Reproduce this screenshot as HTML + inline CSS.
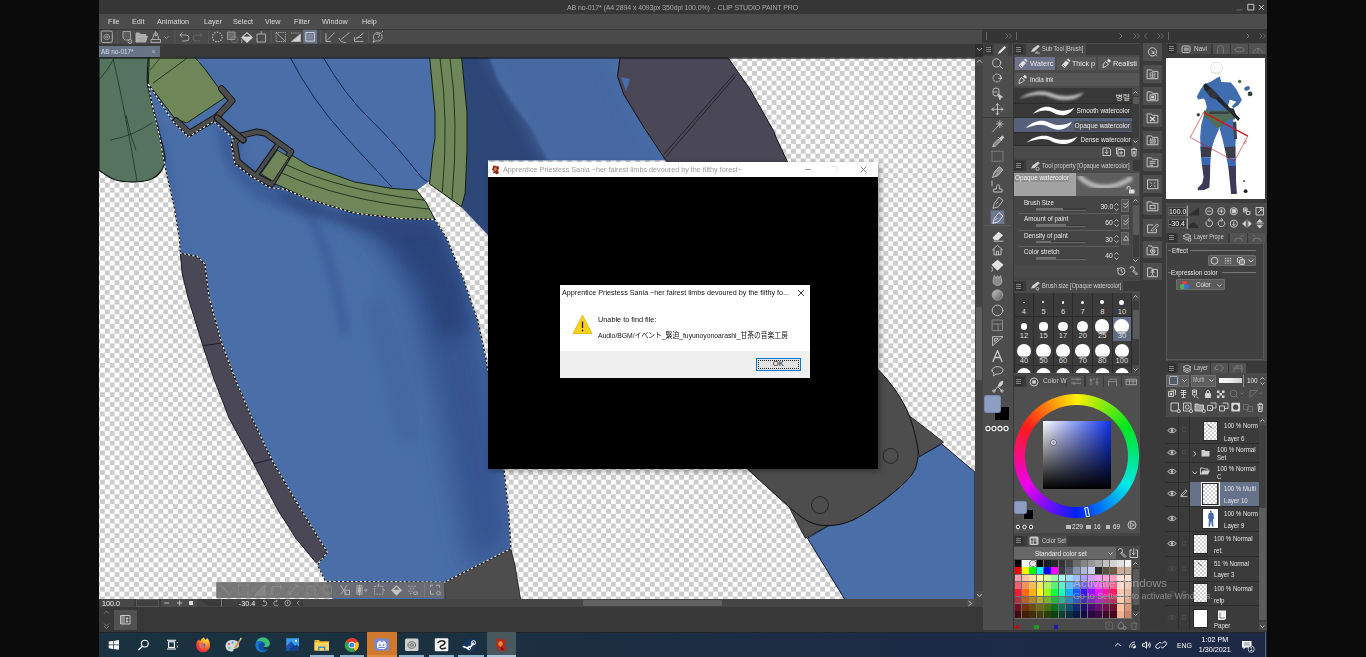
<!DOCTYPE html>
<html lang="en"><head><meta charset="utf-8"><title>CLIP STUDIO PAINT PRO</title>
<style>
*{box-sizing:border-box;margin:0;padding:0}
html,body{width:1366px;height:657px;overflow:hidden;background:#0b0b0b}
body{font-family:"Liberation Sans","Noto Sans CJK JP",sans-serif;font-size:8px;color:#d8d8d8}
#screen{position:absolute;left:0;top:0;width:1366px;height:657px;overflow:hidden;background:#0b0b0b}
.abs{position:absolute}
#app{position:absolute;left:99px;top:0;width:1168px;height:630px;background:#454545;overflow:hidden}
#titlebar{position:absolute;left:0;top:0;width:1168px;height:14.200px;background:#363636}
#titlebar .t{position:absolute;left:468px;top:3px;font-size:7.4px;color:#a9a9a9;white-space:nowrap;letter-spacing:-0.1px}
#menubar{position:absolute;left:0;top:14.200px;width:1168px;height:15.500px;background:#4c4c4c;border-bottom:.9px solid #383838}
#menubar span{position:absolute;top:3px;font-size:8px;color:#dcdcdc;white-space:nowrap;transform-origin:0 50%;transform:scaleX(.9)}
#toolbar{position:absolute;left:0;top:29.700px;width:883px;height:14.300px;background:#4a4a4a}
#tabbar{position:absolute;left:0;top:43.900px;width:883px;height:13px;background:#3a3a3a}
#tab{position:absolute;left:0;top:1.800px;width:61px;height:12px;background:#677488;color:#d5dbe8;font-size:7.4px;line-height:12px;padding-left:2px;white-space:nowrap}
#gamewin{position:absolute;left:488px;top:162px;width:390px;height:307px;background:#000;box-shadow:2px 2px 6px rgba(0,0,0,.35)}
#gamewin .tb{position:absolute;left:0;top:0;width:390px;height:15px;background:#fff}
#gamewin .tt{position:absolute;left:15px;top:1.700px;font-size:7.800px;line-height:12px;color:#9a9a9a;white-space:nowrap}
#msg{position:absolute;left:560px;top:285px;width:250px;height:93px;background:#fff;font-family:"Liberation Sans","Noto Sans CJK JP",sans-serif;color:#111}
#msg .ft{position:absolute;left:0;top:66px;width:250px;height:27px;background:#f0f0f0}
#msg .tt{position:absolute;left:2.200px;top:2.200px;font-size:7.700px;line-height:12px;color:#111;white-space:nowrap}
#msg .l1{position:absolute;left:38px;top:28.700px;font-size:7.500px;line-height:11px;white-space:nowrap}
#msg .l2{position:absolute;left:38px;top:44.700px;font-size:7.500px;line-height:11px;white-space:nowrap}
#okbtn{position:absolute;left:196px;top:73px;width:44.5px;height:12.800px;background:#e1e1e1;border:1.3px solid #0078d7;font-size:7.600px;line-height:10.500px;text-align:center;color:#111}
#okbtn:after{content:"";position:absolute;left:.6px;top:.6px;right:.6px;bottom:.6px;border:.8px dotted #222}
.sx{display:inline-block;transform-origin:0 50%;transform:scaleX(var(--s));white-space:nowrap}
.ic{position:absolute;overflow:visible}
.ic *{vector-effect:none}
#vscroll{position:absolute;left:974.500px;top:43.900px;width:8px;height:555.200px;background:#444}
#toolpal{position:absolute;left:982.500px;top:43px;width:30px;height:589px;background:#4d4d4d}
.grip{position:absolute;background:#2f2f2f}
.pbg{position:absolute;background:#4a4a4a}
.hdr{position:absolute;height:11px;background:#3a3a3a}
.ptab{position:absolute;background:#4a4a4a;color:#cfcfcf;font-size:7.300px;line-height:11px;white-space:nowrap;overflow:visible}
.menu3{position:absolute;width:8px;height:9px;background:#303030}
.menu3:after{content:"";position:absolute;left:1.500px;top:2px;width:5px;height:1px;background:#8a8a8a;box-shadow:0 2px 0 #8a8a8a,0 4px 0 #8a8a8a}
.t{position:absolute;white-space:nowrap;color:#dcdcdc;font-size:7.500px;line-height:9px}
.tr{position:absolute;white-space:nowrap;color:#dcdcdc;font-size:7.500px;line-height:9px;text-align:right}
.sbtn{position:absolute;background:#4e4e4e;width:19px;height:17.700px}
.sb{position:absolute;background:#3c3c3c}

</style></head>
<body>
<div id="screen">
<!-- top.html -->
<div id="app">
 <div id="titlebar"><svg class="ic" style="left:1130px;top:0" width="38" height="14" viewBox="1229 0 38 14" fill="none"><path d="M1236.500,10 H1242.500" stroke="#6f6f6f" stroke-width=".9"/><path d="M1247.800,4.300 H1253.800 V10 H1247.800 Z" stroke="#d6d6d6" stroke-width=".9"/><path d="M1259,5 L1263.800,9.800 M1263.800,5 L1259,9.800" stroke="#d6d6d6" stroke-width=".9"/></svg><div class="t"><span class="sx" style="--s:.943">AB no-017* (A4 2894 x 4093px 350dpi 100.0%)&nbsp; - CLIP STUDIO PAINT PRO</span></div></div>
 <div id="menubar">
  <span style="left:9px">File</span><span style="left:33px">Edit</span><span style="left:58px">Animation</span><span style="left:105px">Layer</span><span style="left:134px">Select</span><span style="left:166px">View</span><span style="left:195px">Filter</span><span style="left:223px">Window</span><span style="left:263px">Help</span>
 </div>
 <div id="toolbar"></div>
 <div id="tabbar"><div id="tab"><span class="sx" style="--s:.86">AB no-017*</span><span style="position:absolute;left:52.500px;top:0;font-size:6.500px;color:#b9c3d8">×</span></div></div>
</div>

<!-- toolbar.html -->
<svg class="ic" style="left:99px;top:29px" width="300" height="16" viewBox="99 29 300 16" fill="none" stroke="#b4b4b4" stroke-width=".9" stroke-linejoin="round">
 <rect x="101.300" y="31" width="11" height="11.500" rx="1.500" stroke="#b5b5b5"/><path d="M104,37 a2.800,2.200 0 1,1 5.500,0 a2.800,2.200 0 1,1 -5.500,0 M105.500,37 a1.300,1 0 1,1 2.600,0 a1.300,1 0 1,1 -2.600,0" stroke-width=".7"/>
 <path d="M117.500,30.500 V43.500" stroke="#5a5a5a"/>
 <path d="M123,31.500 H130.500 V40 H125 L123,38 Z" fill="#5b5b5b" stroke="#a8a8a8"/><circle cx="130" cy="41.500" r="2" fill="#434343"/><path d="M130,40.500 V42.500"/>
 <path d="M136,42 V33 H139.500 L140.500,34.500 H146 V36 M136,42 L138,36.500 H147.500 L145.500,42 Z" fill="#c9c9c9" fill-opacity=".75"/>
 <path d="M151,42.500 H160.500 V39.500 H151 Z M152.500,39.500 L154.500,33 H157 L159,39.500 M155.700,31 V36 M154.200,34.500 L155.700,36.200 L157.200,34.500"/>
 <path d="M164.500,36.500 L166.500,38.500 L168.500,36.500" stroke-width=".8"/>
 <path d="M175,30.500 V43.500" stroke="#5a5a5a"/>
 <path d="M180,35 H186 a2.800,2.800 0 0,1 0,6 H182 M182.300,32.500 L179.800,35 L182.300,37.500"/>
 <path d="M202,35 H196 a2.800,2.800 0 0,0 0,6 H200 M199.700,32.500 L202.200,35 L199.700,37.500" stroke="#666"/>
 <path d="M208.600,30.500 V43.500" stroke="#5a5a5a"/>
 <circle cx="217.300" cy="37" r="4.800" stroke-dasharray="1.400 1.300" stroke-width="1.300"/>
 <rect x="227.500" y="32" width="7.500" height="7.500" fill="#6b6b6b" stroke="#9a9a9a"/><circle cx="234.500" cy="39.500" r="3.300" stroke-dasharray="1 1" stroke="#9a9a9a"/>
 <path d="M241,37.500 L247,32 L253,37.500 L247,43 Z" fill="#d4d4d4" stroke="none"/><path d="M243.500,36.500 H250.500 L247,33.500 Z" fill="#434343" stroke="none"/><path d="M241.500,39.500 q1,2.500 0,3.500" />
 <path d="M257,34 H265.500 V42 H257 Z M261.200,31 V34"/>
 <path d="M271.300,30.500 V43.500" stroke="#5a5a5a"/>
 <path d="M276,32.500 H285.500 V41.500 H276 Z" stroke-dasharray="1.200 1"/><path d="M276,32.500 L285.500,41.500"/>
 <path d="M291,33 H300.500" stroke-dasharray="1.200 1"/><path d="M300.500,34 V41.500 H291.500 Z" fill="#d4d4d4"/>
 <rect x="303.200" y="29.700" width="13.900" height="13.900" fill="#6a7488" stroke="none"/><rect x="305.800" y="32.500" width="8.600" height="8.600" stroke="#d8dbe6"/><rect x="307.300" y="34" width="5.600" height="5.600" fill="#7f889c" stroke="none"/>
 <path d="M320.400,30.500 V43.500" stroke="#5a5a5a"/>
 <path d="M326,33.500 V41.500 H331 M327,40.500 L334.500,32.500"/>
 <path d="M339,38 Q340,42.500 346,42.500 M341,39.500 L349.500,32.500"/>
 <path d="M354.500,37 V41.500 H363.500 M355.500,39.500 L363.500,33"/><path d="M356,37.500 H362" stroke-width=".6"/>
 <path d="M368.400,30.500 V43.500" stroke="#5a5a5a"/>
 <path d="M373.500,36.500 a4.300,4.300 0 1,1 2.500,4.200 L373,42.500 L374.200,39.500 a4.300,4.300 0 0,1 -.7,-3 Z M376.500,35 a1.500,1.500 0 1,1 1.800,1.800 V38 M378.300,39.300 V39.800 M381.500,32.500 L383,31"/>
</svg>

<!-- canvas.html -->
<svg class="abs" id="canvas" style="left:99px;top:56.800px" width="875.5" height="542.300" viewBox="99 56.800 875.5 542.300">
 <defs>
  <pattern id="chk" x="100" y="61" width="9.733" height="9.733" patternUnits="userSpaceOnUse">
   <rect width="9.733" height="9.733" fill="#ffffff"/><rect width="4.867" height="4.867" fill="#cccccc"/><rect x="4.867" y="4.867" width="4.867" height="4.867" fill="#cccccc"/>
  </pattern>
  <filter id="b2" x="-30%" y="-30%" width="160%" height="160%"><feGaussianBlur stdDeviation="1.600"/></filter>
  <filter id="b4" x="-30%" y="-30%" width="160%" height="160%"><feGaussianBlur stdDeviation="4"/></filter>
  <filter id="b8" x="-30%" y="-30%" width="160%" height="160%"><feGaussianBlur stdDeviation="8"/></filter>
  <filter id="b14" x="-30%" y="-30%" width="160%" height="160%"><feGaussianBlur stdDeviation="14"/></filter>
  <clipPath id="legclip"><path id="legshape" d="M148.300,56 L148.300,83.600 L152,103.7 L159.3,134.7 L163.8,160.3 L167.5,178 L173.9,205.4 L179.4,238.3 L180.3,252.9 L197.6,256.5 L204.9,263.8 L209.2,298 L222,343.7 L235.7,380.2 L252,418 L272,460 L297.6,503.8 L318.6,538 L327.4,552 L317.4,564.7 L325.6,581.2 L333,600 L448.9,600 L444.3,582 L511,548.3 L508.6,511 L504,469 L486,358 L488,358 L488,160 L700,160 L700,56 Z"/></clipPath>
   <path id="ants" d="M148.3,83.600 L152,103.700 L159.300,134.7 L163.800,160.300 L167.500,178 L173.900,205.4 L179.400,238.3 L180.3,252.900 L197.600,256.500 L204.900,263.8 L209.200,298 L222,343.700 L235.700,380.200 L252,418 L272,460 L297.600,503.8 L318.600,538 L327.400,552 L317.400,564.7 L325.600,581.2 L444.3,582 L511,548.3 L508.600,511 L504,469 L486,358 L477.8,320.200 L463.200,278.200 L446.8,238 L435,219.300 L400.300,218.400 L354.7,212.900 L309,199.200 L285,189 L270,187.500 L251,176 L235,164 L231.400,145 L233.500,138.500 L213.500,121 L188.500,136.800 L173,121.500 Z"/>
 </defs>
 <rect x="99" y="56" width="876" height="544" fill="url(#chk)"/>
 <!-- main blue body -->
 <use href="#legshape" fill="#4a6fa8"/>
 <g clip-path="url(#legclip)">
  <!-- torso shadow right of vertical strap -->
  <path d="M458,50 L486,50 L490,58 L498,80 L512,102 L533,130 L549,162 L566,186 L566,250 L455,250 Z" fill="#2d4779" filter="url(#b2)"/>
  <path d="M486,50 L600,50 L640,130 L670,170 L552,170 Z" fill="#4667a1" filter="url(#b8)" opacity=".9"/>
  <!-- right side darker -->
  <path d="M436,219 L446.800,238 L463.200,278.200 L477.800,320.200 L486,358 L504,469 L508.600,511 L511,548.300 L470,572 L452,480 L436,400 L410,300 L380,240 L340,214 Z" fill="#34538f" filter="url(#b14)" opacity=".95"/>
  <!-- dark under strap, upper right -->
  <path d="M330,208 L400,219 L437,220 L462,280 L470,330 L440,340 L420,280 L385,240 Z" fill="#2b457c" filter="url(#b8)" opacity=".95"/>
  <!-- shadow under buckle -->
  <path d="M215,120 L243,142 L237,160 L262,176 L300,196 L330,210 L300,215 L260,200 L232,175 L220,150 Z" fill="#3a5b98" filter="url(#b4)" opacity=".9"/>
  <!-- fold streaks -->
  <path d="M305,205 Q335,260 345,335" fill="none" stroke="#3a5a97" stroke-width="9" filter="url(#b4)" opacity=".8"/>
  <path d="M372,300 Q395,370 408,440" fill="none" stroke="#3c5d9a" stroke-width="14" filter="url(#b8)" opacity=".7"/>
  <path d="M150,90 L172,160 L182,250 L160,250 Z" fill="#3f629f" filter="url(#b4)" opacity=".6"/>
   <path d="M280,188 L309,201 L354.700,215 L400.300,220.500 L436,221 L440,236 L400,233 L350,226 L305,213 L278,198 Z" fill="#2d477e" filter="url(#b4)" opacity=".75"/>
 </g>
 <!-- fold lines on torso -->
 <path d="M322.500,56 Q345,95 369.300,118.300 T422.200,178 L427.500,181.500" fill="none" stroke="#0f2148" stroke-width="1"/>
 <path d="M289.500,56 Q312,100 345.500,136.500 T392,187" fill="none" stroke="#0f2148" stroke-width="1"/>
 <!-- gap (transparent) -->
 <path d="M416.8,190 L428.6,181.8 L442.3,192.800 L461.5,207 L488,234.8 L488,360 L486,358 L477.8,320.2 L463.2,278.2 L446.8,238 L435,219.3 L425.9,202 Z" fill="url(#chk)"/>
 <!-- bag -->
 <path d="M148.300,56 L148.300,57 C148.2,61.1 146.8,73.9 147.4,81.7 C148.0,89.5 149.9,94.9 152.0,103.7 C154.1,112.5 157.8,125.6 160.0,134.7 C162.2,143.8 164.8,151.9 165.0,158.0 C165.2,164.1 163.2,167.6 161.0,171.0 C158.8,174.4 156.2,176.7 152.0,178.5 C147.8,180.3 141.7,181.4 135.5,181.6 C129.3,181.8 121.1,181.4 115.0,179.5 C108.900,177.600 101.700,171.600 99.000,170.000 L99,56 Z" fill="#56735f" stroke="#0c1a14" stroke-width="1.200"/>
 <path d="M113,58 Q125,110 137,181" fill="none" stroke="#1a3526" stroke-width=".8"/>
 <path d="M99,80 Q108,70 114,58" fill="none" stroke="#1a3526" stroke-width=".8"/>
 <path d="M110,140 Q135,135 153,122" fill="none" stroke="#1a3526" stroke-width=".8"/>
 <path d="M126,115 Q130,135 136,150" fill="none" stroke="#1a3526" stroke-width=".8"/>
 <!-- upper strap -->
 <path d="M149.200,56 L194,56 L205,69 L217.7,86.3 L225,97.3 L186.7,122.8 L174.8,118.3 L148.3,83.6 Z" fill="#6f8659" stroke="#10200f" stroke-width="1"/>
 <path d="M153,83 L187,58" fill="none" stroke="#10200f" stroke-width=".8"/>
 <path d="M150,70 L160,58" fill="none" stroke="#10200f" stroke-width=".6"/>
 <!-- buckle 1 -->
 <g fill="none" stroke-linejoin="round" stroke-linecap="round">
  <path d="M176,120.5 L189.5,133 L217,116.5 L232,100.5 L221.500,88.5" stroke="#141414" stroke-width="7"/>
  <path d="M217,117.5 L243.3,140" stroke="#141414" stroke-width="6.5"/>
  <path d="M176,120.5 L189.5,133 L217,116.5 L232,100.5 L221.500,88.5" stroke="#4c4c4c" stroke-width="5"/>
  <path d="M217,117.5 L243.3,140" stroke="#4c4c4c" stroke-width="4.5"/>
 </g>
 <!-- horizontal strap -->
 <path d="M289,154.500 L293,155.700 L309,165.400 L354.7,181.8 L391.2,188.2 L416.8,190 L425.9,202 L435,219.3 L400.3,218.4 L354.7,212.9 L309,199.200 L285,188 L273,183 Z" fill="#6f8659" stroke="#10200f" stroke-width="1"/>
 <path d="M285,164 Q340,190 424,200" fill="none" stroke="#10200f" stroke-width=".8"/>
 <path d="M280,172 Q340,200 430,209" fill="none" stroke="#10200f" stroke-width=".8"/>
 <!-- buckle 2 (D ring) -->
 <g fill="none" stroke-linejoin="round" stroke-linecap="round">
  <path d="M241,135.500 L256.700,131.500 L265,133 L291,151.500 L271.500,184 L254,174.500 L237.500,161 L234.500,142.500 Z" stroke="#141414" stroke-width="6.500"/>
  <path d="M276.600,146 L256,175" stroke="#141414" stroke-width="5.500"/>
  <path d="M241,135.500 L256.700,131.500 L265,133 L291,151.500 L271.500,184 L254,174.500 L237.500,161 L234.500,142.500 Z" stroke="#4c4c4c" stroke-width="4.500"/>
  <path d="M276.600,146 L256,175" stroke="#4c4c4c" stroke-width="3.500"/>
 </g>
 <path d="M277.500,150 L289,157 L273,181 L261,173.500 Z" fill="#6f8659" stroke="#10200f" stroke-width=".8"/>
 <path d="M217,117.500 L243.300,140" stroke="#141414" stroke-width="6.500" stroke-linecap="round"/><path d="M217,117.500 L243.300,140" stroke="#4c4c4c" stroke-width="4.500" stroke-linecap="round"/>
 <!-- vertical strap -->
 <path d="M429.500,56 L435,112.800 L435,138 L433.2,149.3 L429.5,183.700 L442.3,192.8 L461.500,206.5 L465.2,192.800 L467,149.3 L467,112.800 L461.500,56 Z" fill="#6f8659" stroke="#10200f" stroke-width="1"/>
 <path d="M440,58 Q449,120 442.300,192" fill="none" stroke="#10200f" stroke-width=".8"/>
 <path d="M450,58 Q459,120 452,199" fill="none" stroke="#10200f" stroke-width=".8"/>
 <!-- dark leg panel (left) -->
 <path d="M180.300,252.9 L197.6,256.5 L204.9,263.800 L209.2,298 L222,343.7 L235.7,380.2 L252,418 L272,460 L297.600,503.800 L318.6,538 L327.400,552 L316.4,562.9 L295.8,538 L277.5,509.3 L253.8,463.700 L229.100,418 L213.8,378.400 L202.8,345.500 L188.2,298 L182.100,273 Z" fill="#4a4756" stroke="#15141c" stroke-width=".9"/>
 <path d="M202.8,345.500 L221,343" stroke="#15141c" stroke-width=".8"/><path d="M253.8,463.700 L271,459" stroke="#15141c" stroke-width=".8"/>
 <!-- knee grey -->
 <path d="M444.300,582 L511,549.2 L515,565.3 L520.700,600 L445,600 Z" fill="#4d4d4d" stroke="#151515" stroke-width=".8"/>
 <!-- sleeve dark panel (top right) -->
 <path d="M620.200,56 L617.500,76.300 L623.900,94.5 L644,127.400 L665.900,160.3 L700,200 L800,200 L787.400,161.400 L776.4,138 L773.700,131 L750,89 L727,56 Z" fill="#4a4756" stroke="#121118" stroke-width="1"/>
 <path d="M621,77 L630,79 L626,91 Z" fill="#4a6fa8"/>
 <path d="M737,74.400 L666,156.600 M735,73 L664,154" stroke="#15141c" stroke-width=".7" fill="none"/>
 <!-- elbow pad -->
 <path d="M907,413.700 L943.600,442 L919.800,456.600 L912,440 Z" fill="#4f4f4f" stroke="#111" stroke-width=".8"/>
 <path d="M789.2,507 L805.2,538 L828,525.800 L800,505 Z" fill="#4f4f4f" stroke="#111" stroke-width=".8"/>
 <!-- forearm blue -->
 <path d="M941.700,443.800 L975,472 L975,600 L845.2,600 L807.500,538 L828,525.800 L853.2,519.7 L885.2,499 L910.300,476.3 L917,458 L919,456.600 Z" fill="#4a6fa8" stroke="#0d1730" stroke-width="1"/>
 <path d="M860.0,355.0 C863.0,357.3 871.8,363.0 877.8,369.0 C883.8,375.0 890.8,383.3 896.0,390.9 C901.2,398.5 905.4,405.8 908.9,414.6 C912.4,423.4 915.7,436.2 917.1,443.8 C918.5,451.4 918.6,454.6 917.5,460.0 C916.4,465.4 915.7,469.8 910.3,476.3 C904.9,482.8 894.7,491.8 885.2,499.0 C875.7,506.2 862.7,515.3 853.2,519.7 C843.7,524.1 835.5,525.2 828.0,525.4 C820.5,525.6 814.5,524.1 808.0,521.0 C801.500,517.900 792.300,509.300 789.200,507.000 L748,469.400 L740,460 Z" fill="#4d4d4d" stroke="#0d0d0d" stroke-width="1"/>
 <circle cx="890.6" cy="455.7" r="7.5" fill="none" stroke="#1c1c1c" stroke-width=".8"/>
 <circle cx="820" cy="504.8" r="8.5" fill="none" stroke="#1c1c1c" stroke-width=".8"/>
 <!-- marching ants -->
 <use href="#ants" fill="none" stroke="#101010" stroke-width="1.1"/>
 <use href="#ants" fill="none" stroke="#ffffff" stroke-width="1.1" stroke-dasharray="2.2 2.2"/>
<!-- selection launcher -->
 <rect x="216.200" y="581.900" width="228.400" height="15.900" fill="#6b6b6b" fill-opacity=".9"/>
 <g fill="none" stroke="#8e8e8e" stroke-width=".9">
  <path d="M220,584.500 L230,595"/><rect x="238.500" y="585" width="9.500" height="9" stroke-dasharray="1.200 1.200"/><path d="M254.500,595 H265 V584.500 Z" fill="#8e8e8e" fill-opacity=".6"/>
  <path d="M272,594 V586.500 H280.500 M280.500,584.500 v4 M270,594 h4"/><path d="M289,594 L298,585 M295,585 h3 v3 M289,591 v3 h3"/>
  <circle cx="311" cy="590" r="4.300" stroke-dasharray="1.300 1.200" stroke-width="1.200"/>
  <path d="M324,585 h6 l1.500,1.500 v7 h-7.500 Z M326,587 h4" stroke="#858585"/>
 </g>
 <g fill="none" stroke="#b4b4b4" stroke-width=".9">
  <path d="M340.500,585 L346,594 M347,585 L341,594"/><rect x="345" y="590" width="4.500" height="4.500"/>
  <path d="M357,585.500 h5 v8.500 h-5 Z M359.500,584.500 v11 M364,590 h2.500 M365.500,588.500 l1.500,1.500 l-1.500,1.500" /><rect x="358" y="587" width="3" height="5.500" fill="#b4b4b4" stroke="none"/>
  <rect x="374.500" y="586" width="8.500" height="8" stroke-dasharray="1.500 1.200"/><path d="M378.700,583.500 v3 M383,590 h2"/>
  <path d="M391,590 L396.500,585 L402,590 L396.500,595.500 Z" fill="#c4c4c4" stroke="none"/><path d="M393.500,589.500 H399.500 L396.500,586.500 Z" fill="#6b6b6b" stroke="none"/>
  <g fill="#b4b4b4" stroke="none"><circle cx="409" cy="586" r=".7"/><circle cx="412" cy="586" r=".7"/><circle cx="415" cy="586" r=".7"/><circle cx="410.500" cy="588.500" r=".7"/><circle cx="413.500" cy="588.500" r=".7"/><circle cx="409" cy="591" r=".7"/><circle cx="412" cy="591" r=".7"/><circle cx="410.500" cy="593.500" r=".7"/></g><ellipse cx="415.500" cy="593" rx="2.300" ry="1.300"/>
  <path d="M424.500,582.500 V597" stroke="#7c7c7c"/>
  <path d="M430.500,587 V585 H433 M436,585 H439.500 V587.500 M430.500,590 V594 H434" /><circle cx="438.500" cy="593" r="1.800"/>
 </g>
</svg>
<div class="abs" style="left:99px;top:56.800px;width:875.500px;height:2px;background:linear-gradient(to bottom,rgba(25,25,28,.85),rgba(25,25,28,.55))"></div>

<!-- dialog.html -->
<div id="gamewin">
 <div class="tb">
  <svg class="abs" style="left:3px;top:2.5px" width="9" height="10" viewBox="0 0 9 10"><path d="M2,1 L4,0.300 L5,1.5 L7,0.800 L8.2,3 L7,5.500 L8,8 L5.500,9.600 L3.800,8 L2,8.600 L2.600,6 L0.600,4.500 L1.800,3 Z" fill="#9c2e1e"/><path d="M3,3 L5,2.500 L6,4.500 L4.500,6.500 L3,5 Z" fill="#d8705a"/><path d="M5.5,6 L7,7.500 L5,8.500Z" fill="#6a1a10"/></svg>
  <div class="tt"><span class="sx" style="--s:0.927">Apprentice Priestess Sania ~her fairest limbs devoured by the filthy forest~</span></div>
  <svg class="abs" style="left:314px;top:0" width="76" height="15" viewBox="0 0 76 15"><path d="M3,7.5 H9" stroke="#8a8a8a" stroke-width=".9"/><path d="M29.500,4.500 H35 V10" stroke="#e6e6e6" stroke-width=".9" fill="none"/><path d="M58.500,4.500 L64.500,10.500 M64.500,4.500 L58.500,10.500" stroke="#777" stroke-width=".9"/></svg>
 </div>
</div>
<div id="msg">
 <div class="tt"><span class="sx" style="--s:0.933">Apprentice Priestess Sania ~her fairest limbs devoured by the filthy fo...</span></div>
 <svg class="abs" style="left:236px;top:3px" width="10" height="10" viewBox="0 0 10 10"><path d="M2,2 L8,8 M8,2 L2,8" stroke="#222" stroke-width=".9"/></svg>
 <svg class="abs" style="left:12px;top:29px" width="21" height="21" viewBox="0 0 21 21"><path d="M10.500,1.200 L20,19.500 L1,19.500 Z" fill="#f7d317" stroke="#e0b400" stroke-width=".8" stroke-linejoin="round"/><path d="M10.500,7.500 V14" stroke="#1a1a1a" stroke-width="1.3"/><circle cx="10.500" cy="16.400" r=".9" fill="#1a1a1a"/></svg>
 <div class="l1"><span class="sx" style="--s:0.973">Unable to find file:</span></div>
 <div class="l2"><span class="sx" style="--s:0.906">Audio/BGM/イベント_緊迫_fuyunoyonoarashi_甘茶の音楽工房</span></div>
 <div class="ft"></div>
 <div id="okbtn">OK</div>
</div>

<!-- tools.html -->
<div class="abs" style="left:982px;top:29.200px;width:285px;height:14px;background:#353535"></div>
<div id="vscroll">
 <div class="abs" style="left:0;top:0;width:8.5px;height:13px;background:#2f2f2f"></div>
 <svg class="ic" style="left:1px;top:3px" width="7" height="5" viewBox="0 0 7 5"><path d="M1,1 L3.500,3.600 L6,1" fill="none" stroke="#c8c8c8" stroke-width=".9"/></svg>
 <div class="abs" style="left:0;top:13px;width:8.5px;height:9px;background:#4a4a4a"></div>
 <svg class="ic" style="left:1px;top:15.5px" width="7" height="5" viewBox="0 0 7 5"><path d="M1,3.600 L3.500,1 L6,3.600" fill="none" stroke="#c8c8c8" stroke-width=".9"/></svg>
 <div class="abs" style="left:1px;top:263px;width:6.500px;height:73.500px;background:#5c5c5c;border-radius:1px"></div>
 <div class="abs" style="left:0;top:547.500px;width:8.500px;height:7.700px;background:#4c4c4c"></div>
 <svg class="ic" style="left:1px;top:549px" width="7" height="5" viewBox="0 0 7 5"><path d="M1,1 L3.500,3.600 L6,1" fill="none" stroke="#c8c8c8" stroke-width=".9"/></svg>
</div>
<div id="toolpal">
 <div class="abs" style="left:0;top:0;width:29.5px;height:13px;background:#3e3e3e"></div>
 <div class="abs" style="left:2px;top:2px;width:7px;height:9px;background:#333"></div>
 <svg class="ic" style="left:3.5px;top:4px" width="5" height="5" viewBox="0 0 5 5"><path d="M0,.5H5M0,2.500H5M0,4.500H5" stroke="#aaa" stroke-width=".7"/></svg>
 <div class="abs" style="left:11.500px;top:1px;width:14px;height:12px;background:#4a4a4a"></div>
 <svg class="ic" style="left:14px;top:2px" width="10" height="10" viewBox="0 0 10 10"><path d="M1,9 L2,6.500 L7.500,1 L9,2.500 L3.500,8 Z" fill="#e4e4e4"/></svg>
 <!-- tool icons, centre x=14.5 -->
 <svg class="ic" style="left:0;top:13px" width="29.500" height="420" viewBox="983 56 29.500 420" fill="none" stroke="#c9c9c9" stroke-width=".9" stroke-linecap="round" stroke-linejoin="round">
  <circle cx="996.700" cy="62.900" r="4.100"/><path d="M999.700,66 L1002.500,68.600"/>
  <circle cx="997" cy="78" r="4" stroke-dasharray="1.500 1.300"/><path d="M1000.500,75.500 L1001.500,78.500 L998.500,78.200" />
  <path d="M993,90 a3,2 0 1,1 6,0 v4 a3,2 0 0,1 -6,0 Z M994,92h3"/><path d="M998,94 L1002.500,97 L1000.500,97.500 L1000,99.500 Z" fill="#d6d6d6"/>
  <path transform="translate(0,1.300)" d="M997.500,102.500 V113.500 M992,108 H1003 M996,104 L997.500,102.500 L999,104 M996,112 L997.500,113.500 L999,112 M993.500,106.500 L992,108 L993.500,109.500 M1001.500,106.500 L1003,108 L1001.500,109.500"/>
  <path d="M983,117.500 H1012.500" stroke="#3a3a3a" stroke-width="1"/>
  <g transform="translate(0,2)"><path d="M992.500,130 L998.500,123.500 M999.800,118.500 V125.500 M996.500,122 H1003 M997.500,119.700 L1002,124.300 M1002,119.700 L997.500,124.300" stroke-width=".8"/></g>
  <g transform="translate(0,1)"><path d="M992.800,145.500 L993.800,142.800 L998.500,138 L1000.500,140 L995.800,144.700 Z" fill="#c9c9c9" fill-opacity=".45"/><path d="M998.500,136.500 L1002,140 M999.500,137.500 L1001.500,135.500 a1.200,1.200 0 0,1 1.700,1.700 L1001,139.300" fill="#c9c9c9"/></g>
  <g transform="translate(0,1.3)"><rect x="992" y="150" width="11" height="10" stroke-dasharray="1 1.200" stroke="#8c8c8c"/></g>
  <g transform="translate(0,0.6)"><path d="M992.600,176.500 L994.300,171.500 L999.300,166 L1003,169.300 L998,174.800 Z" fill="#c9c9c9" fill-opacity=".55"/><path d="M996.800,171.800 L993.500,175.500" stroke="#4d4d4d"/></g>
  <path d="M994,192 h8 v-3 h-2.500 v-2 a1.600,1.600 0 1,0 -3,0 v2 h-2.500 Z M992,181 v5" />
  <path d="M993,208 L994.500,203 L999,197 L1003,200.500 L998.500,206.500 Z M996.500,203.500 L998,202"/>
  <rect x="990.600" y="210.400" width="13.800" height="13.600" fill="#6c7690" stroke="none"/><path d="M985,225.400 H1010" stroke="#666" stroke-width=".7"/>
  <path d="M993,223 L994.500,218 L999,212.500 L1003,216 L998.500,221.500 Z M995.500,220 L997.500,218" stroke="#eef0f6"/>
  <g transform="translate(0,1.2)"><path d="M992.500,236.500 L998.500,230.500 L1003,234 L998,239 H994.500 Z" fill="#e4e4e4" stroke="none"/><path d="M994,240 H1003" /></g>
  <g transform="translate(0,1.8)"><path d="M992.500,248 L997.500,243.500 L1002.500,248 M994,247.500 V253 H1001 V247.500 M996.500,253 V249.500 H998.500 V253"/></g>
  <g transform="translate(0,0.8)"><path d="M991.500,264 L997.500,259 L1003.500,264 L997.500,270 Z" fill="#e4e4e4" stroke="none"/><path d="M992,266.500 q1.500,3 0,4" /></g>
  <g transform="translate(0,-2)"><path d="M993,283 a4.500,4.500 0 1,0 9,0 l-1.500,-5.500 l-1.500,3 l-1.500,-3 l-1.500,3 l-1.500,-3 Z" fill="#8a8a8a" stroke="#bdbdbd" stroke-width=".7"/></g>
  <circle cx="997.500" cy="295" r="5.300" fill="url(#tg)" stroke="#b0b0b0" stroke-width=".6"/>
  <circle cx="997.500" cy="310.400" r="5.300"/>
  <path d="M992.500,320 H1002.500 V330.500 H992.500 Z M992.500,324 H1002.500 M998,324 V330.500" stroke="#8d8d8d"/>
  <path d="M992.900,336.700 H1003 L992.900,345.500 Z M994.900,338.700 H998.300 L994.900,341.700 Z" />
  <path d="M993,361.500 L997.500,350.500 L1002,361.500 M994.800,357.500 H1000.200" stroke-width="1.300"/>
  <path d="M992,370.500 a5.500,3.800 0 1,1 4,3.500 l-2.500,2 l.5,-2.800 a4,3 0 0,1 -2,-2.700 Z"/>
  <path d="M994,391 L1001,383 M994,391 m-1.200,0 a1.200,1.200 0 1,0 2.400,0 a1.200,1.200 0 1,0 -2.400,0 M1002,391 m-1.200,0 a1.200,1.200 0 1,0 2.400,0 a1.200,1.200 0 1,0 -2.400,0 M998,387 L1002,391" /><path d="M998.500,385.500 q.5,-4 4.500,-4.500 q0,4 -3,5.500 Z" fill="#d6d6d6"/>
  <defs><linearGradient id="tg" x1="0" y1="0" x2="1" y2="1"><stop offset="0" stop-color="#c4c4c4"/><stop offset="1" stop-color="#5c5c5c"/></linearGradient></defs>
 </svg>
 <div class="abs" style="left:11.500px;top:362.500px;width:15.500px;height:15px;background:#000;border:1px solid #4f4f4f"></div>
 <div class="abs" style="left:1px;top:352.200px;width:17.600px;height:18.200px;background:#8f9dc0;border:1.300px solid #7688b6;border-radius:2.500px"></div>
 <svg class="ic" style="left:1.500px;top:381.500px" width="26" height="7" viewBox="0 0 26 7"><rect x=".5" y=".5" width="25" height="6" rx="3" fill="#3a3a3a" stroke="#555" stroke-width=".6"/><g fill="none" stroke="#fff" stroke-width="1.100"><circle cx="4" cy="3.500" r="2.100"/><circle cx="10" cy="3.500" r="2.100"/><circle cx="16" cy="3.500" r="2.100"/><circle cx="22" cy="3.500" r="2.100"/></g></svg>
</div>
<div class="abs" style="left:1012.5px;top:43px;width:1.500px;height:587px;background:#383838"></div>

<!-- subtool.html -->
<div class="abs" style="left:985.500px;top:32px;width:1.600px;height:8px;background:#6a6a6a"></div>
<div class="abs" style="left:1015.500px;top:32px;width:1.600px;height:8px;background:#6a6a6a"></div>
<div class="abs" style="left:1167.500px;top:32px;width:1.600px;height:8px;background:#6a6a6a"></div>
<svg class="ic" style="left:1004.5px;top:33px" width="8" height="6" viewBox="0 0 8 6"><path d="M.5,.5 L3,3 L.5,5.500 M4,.5 L6.500,3 L4,5.500" fill="none" stroke="#7a7a7a" stroke-width=".9"/></svg>
<svg class="ic" style="left:1119px;top:33px" width="4" height="6" viewBox="0 0 4 6"><path d="M.5,.5 L3,3 L.5,5.500" fill="none" stroke="#7a7a7a" stroke-width=".9"/></svg>
<svg class="ic" style="left:1132.5px;top:33px" width="8" height="6" viewBox="0 0 8 6"><path d="M.5,.5 L3,3 L.5,5.500 M4,.5 L6.500,3 L4,5.500" fill="none" stroke="#7a7a7a" stroke-width=".9"/></svg>
<svg class="ic" style="left:1143.5px;top:33px" width="4" height="6" viewBox="0 0 4 6"><path d="M3,.5 L.5,3 L3,5.500" fill="none" stroke="#7a7a7a" stroke-width=".9"/></svg>
<svg class="ic" style="left:1156.5px;top:33px" width="8" height="6" viewBox="0 0 8 6"><path d="M.5,.5 L3,3 L.5,5.500 M4,.5 L6.500,3 L4,5.500" fill="none" stroke="#7a7a7a" stroke-width=".9"/></svg>
<svg class="ic" style="left:1245.5px;top:33px" width="4" height="6" viewBox="0 0 4 6"><path d="M.5,.5 L3,3 L.5,5.500" fill="none" stroke="#7a7a7a" stroke-width=".9"/></svg>
<svg class="ic" style="left:1259px;top:33px" width="8" height="6" viewBox="0 0 8 6"><path d="M.5,.5 L3,3 L.5,5.500 M4,.5 L6.500,3 L4,5.500" fill="none" stroke="#7a7a7a" stroke-width=".9"/></svg>
<div class="pbg" style="left:1013.500px;top:43px;width:126.500px;height:114.500px"></div>
<div class="hdr" style="left:1013.500px;top:43.5px;width:126.500px;height:11.5px"></div>
<div class="menu3" style="left:1014.500px;top:44.5px"></div>
<div class="ptab" style="left:1025.5px;top:43.5px;width:60.5px;height:11.5px"></div>
<div class="t" style="left:1042px;top:45.1px;font-size:7.4px;line-height:8.9px;color:#cfcfcf;"><span class="sx" style="--s:0.762">Sub Tool [Brush]</span></div>
<svg class="ic" style="left:1029.5px;top:44.0px" width="11" height="10" viewBox="0 0 11 10"><path d="M1,8 L2.500,5 L8,0.800 L9.800,2.500 L4.500,7.500 Z" fill="#d0d0d0"/><path d="M5,9 H10 M7,7 V9" stroke="#d0d0d0" stroke-width=".8"/></svg>
<div class="abs" style="left:1014.5px;top:56.8px;width:40.5px;height:13.3px;background:#6d7489"></div>
<div class="t" style="left:1030px;top:58.9px;font-size:7.8px;line-height:9.4px;color:#e6e6e6;"><span class="sx" style="--s:0.963">Waterc</span></div>
<svg class="ic" style="left:1017.0px;top:58.3px" width="11" height="11" viewBox="0 0 11 11"><path d="M1.500,7.500 L6,2.500 L9,5 L4.500,10 Z" fill="#e0e0e0"/><path d="M7,1.800 L8.300,0.600 L10.500,2.700 L9.300,4 Z" fill="#e0e0e0"/><path d="M3,7 L5,9" stroke="#555" stroke-width=".7"/></svg>
<div class="abs" style="left:1057px;top:56.8px;width:39px;height:13.3px;background:#565656"></div>
<div class="t" style="left:1072px;top:58.9px;font-size:7.8px;line-height:9.4px;color:#e6e6e6;"><span class="sx" style="--s:0.915">Thick p</span></div>
<svg class="ic" style="left:1059.5px;top:58.3px" width="11" height="11" viewBox="0 0 11 11"><path d="M1.500,7.500 L6,2.500 L9,5 L4.500,10 Z" fill="#e0e0e0"/><path d="M7,1.800 L8.300,0.600 L10.500,2.700 L9.300,4 Z" fill="#e0e0e0"/><path d="M3,7 L5,9" stroke="#555" stroke-width=".7"/></svg>
<div class="abs" style="left:1098px;top:56.8px;width:40.7px;height:13.3px;background:#565656"></div>
<div class="t" style="left:1113px;top:58.9px;font-size:7.8px;line-height:9.4px;color:#e6e6e6;"><span class="sx" style="--s:0.938">Realisti</span></div>
<svg class="ic" style="left:1100.5px;top:58.3px" width="11" height="11" viewBox="0 0 11 11"><path d="M2,9.500 Q1.500,6 4.500,3.500 L7.500,6 Q5.500,9 2,9.500 Z" fill="none" stroke="#e0e0e0" stroke-width=".9"/><path d="M6,2.600 L7.800,0.800 L10,2.900 L8.300,4.700 Z" fill="#e0e0e0"/></svg>
<div class="abs" style="left:1014.5px;top:72.5px;width:124.2px;height:13.5px;background:#565656"></div>
<div class="t" style="left:1030px;top:74.8px;font-size:7.8px;line-height:9.4px;color:#e6e6e6;"><span class="sx" style="--s:0.809">India ink</span></div>
<svg class="ic" style="left:1017.0px;top:74.0px" width="11" height="11" viewBox="0 0 11 11"><path d="M2,9.500 Q1.500,6 4.500,3.500 L7.500,6 Q5.500,9 2,9.500 Z" fill="none" stroke="#e0e0e0" stroke-width=".9"/><path d="M6,2.600 L7.800,0.800 L10,2.900 L8.300,4.700 Z" fill="#e0e0e0"/></svg>
<div class="abs" style="left:1014px;top:88px;width:117.500px;height:57.500px;background:#2c2c2c"></div>
<div class="abs" style="left:1014px;top:88.4px;width:117.500px;height:14.6px;background:#383838;overflow:hidden">
<svg class="ic" style="left:0;top:0" width="118" height="14.6" viewBox="0 0 118 14"><defs><filter id="bf0" x="-10%" y="-40%" width="120%" height="180%"><feGaussianBlur stdDeviation="1.0"/></filter></defs><path d="M5,10.500 C16.7,2.4 28.4,1.4 37.5,4.8 S57.0,8.8 70,4 C62.2,14.1 46.6,13.1 37.5,9.2 S19.3,6.1 5,10.500 Z" fill="#fff" fill-opacity="0.62" filter="url(#bf0)"/></svg>
</div>
<div class="tr" style="right:236.4px;top:92.5px;font-family:NanumGothic,sans-serif;font-size:7.600px;color:#e8e8e8">병렬</div>
<div class="abs" style="left:1014px;top:103.6px;width:117.500px;height:13.1px;background:#383838;overflow:hidden">
<svg class="ic" style="left:0;top:0" width="118" height="13.1" viewBox="0 0 118 14"><defs><filter id="bf1" x="-10%" y="-40%" width="120%" height="180%"><feGaussianBlur stdDeviation="0.7"/></filter></defs><path d="M16,10.500 C23.9,2.3 31.8,1.3 38.0,4.6 S51.2,8.6 60,4 C54.7,14.2 44.2,13.2 38.0,9.4 S25.7,6.2 16,10.500 Z" fill="#fff" fill-opacity="1" filter="url(#bf1)"/></svg>
</div>
<div class="tr" style="right:235.8px;top:106.4px;font-size:7.8px;line-height:9.4px;color:#ececec;"><span class="sx" style="--s:0.823;transform-origin:100% 50%">Smooth watercolor</span></div>
<div class="abs" style="left:1014px;top:118.2px;width:117.500px;height:13.5px;background:#58617c;overflow:hidden">
<svg class="ic" style="left:0;top:0" width="118" height="13.5" viewBox="0 0 118 14"><defs><filter id="bf2" x="-10%" y="-40%" width="120%" height="180%"><feGaussianBlur stdDeviation="0.7"/></filter></defs><path d="M10,10.500 C18.6,2.3 27.3,1.3 34.0,4.6 S48.4,8.6 58,4 C52.2,14.2 40.7,13.2 34.0,9.4 S20.6,6.2 10,10.500 Z" fill="#fff" fill-opacity="1" filter="url(#bf2)"/></svg>
<div class="abs" style="right:0;top:3px;width:57.500px;height:10px;background:#4b4d57"></div>
</div>
<div class="tr" style="right:235.8px;top:121.4px;font-size:7.8px;line-height:9.4px;color:#ececec;"><span class="sx" style="--s:0.841;transform-origin:100% 50%">Opaque watercolor</span></div>
<div class="abs" style="left:1014px;top:132.5px;width:117.500px;height:12.8px;background:#383838;overflow:hidden">
<svg class="ic" style="left:0;top:0" width="118" height="12.8" viewBox="0 0 118 14"><defs><filter id="bf3" x="-10%" y="-40%" width="120%" height="180%"><feGaussianBlur stdDeviation="0.6"/></filter></defs><path d="M8,10.500 C18.1,2.4 28.2,1.4 36.0,4.8 S52.8,8.8 64,4 C57.3,14.1 43.8,13.1 36.0,9.2 S20.3,6.1 8,10.500 Z" fill="#fff" fill-opacity="1" filter="url(#bf3)"/></svg>
</div>
<div class="tr" style="right:235.8px;top:135.0px;font-size:7.8px;line-height:9.4px;color:#ececec;"><span class="sx" style="--s:0.827;transform-origin:100% 50%">Dense watercolor</span></div>
<div class="sb" style="left:1132px;top:88px;width:7px;height:57.500px"></div>
<div class="abs" style="left:1132px;top:88px;width:7px;height:8px;background:#4a4a4a"></div><svg class="ic" style="left:1133px;top:90.5px" width="5" height="3" viewBox="0 0 5 3"><path d="M0.500,2.5 L2.5,0.500 L4.5,2.5" fill="none" stroke="#c8c8c8" stroke-width=".9"/></svg>
<div class="abs" style="left:1132.500px;top:97px;width:6px;height:7px;background:#5a5a5a;border-radius:1px"></div>
<div class="abs" style="left:1132px;top:137.500px;width:7px;height:8px;background:#4a4a4a"></div><svg class="ic" style="left:1133px;top:140px" width="5" height="3" viewBox="0 0 5 3"><path d="M0.500,0.500 L2.5,2.5 L4.5,0.500" fill="none" stroke="#c8c8c8" stroke-width=".9"/></svg>
<svg class="ic" style="left:1100px;top:147px" width="40" height="10" viewBox="1100 147 40 10" fill="none" stroke="#cfcfcf" stroke-width=".9"><path d="M1103,148 H1109 L1110.500,149.500 V155.500 H1103 Z M1106.700,149.500 V153.500 M1105,152 L1106.700,153.700 L1108.400,152"/><path d="M1116.500,148 H1122 V149.500 M1118,149.500 H1124.500 V156 H1118 Z M1116.500,148 V154 H1118 M1121.200,151 V154.600 M1119.400,152.800 H1123"/><path d="M1131,149.500 H1137 M1133,149.500 V148.300 H1135 V149.500 M1131.700,149.500 L1132.200,156 H1135.800 L1136.300,149.500 M1133.300,151 V154.500 M1134.700,151 V154.500"/></svg>
<div class="pbg" style="left:1013.500px;top:160px;width:126.500px;height:116.500px"></div>
<div class="hdr" style="left:1013.500px;top:160.2px;width:126.500px;height:11.2px"></div>
<div class="menu3" style="left:1014.500px;top:161.2px"></div>
<div class="ptab" style="left:1026px;top:160.2px;width:106.5px;height:11.2px"></div>
<div class="t" style="left:1042px;top:161.7px;font-size:7.4px;line-height:8.9px;color:#cfcfcf;"><span class="sx" style="--s:0.787">Tool property [Opaque watercolor]</span></div>
<svg class="ic" style="left:1030px;top:160.7px" width="11" height="10" viewBox="0 0 11 10"><path d="M1,7.500 L2.500,4.500 L8,0.500 L9.800,2.200 L4.500,7 Z" fill="#d0d0d0"/><circle cx="7.500" cy="7.800" r="1.600" fill="none" stroke="#d0d0d0" stroke-width=".8"/></svg>
<div class="abs" style="left:1013.800px;top:173px;width:125.200px;height:22.800px;background:#5e5e5e;overflow:hidden">
<div class="abs" style="left:0;top:0;width:62.700px;height:22.800px;background:#a3a3a3"></div>
<svg class="ic" style="left:0;top:0" width="125" height="23" viewBox="0 0 125 23"><defs><filter id="bfp"><feGaussianBlur stdDeviation="1.600"/></filter></defs><path d="M66,4 C80,18 100,16 116,6" fill="none" stroke="#b9b9b9" stroke-width="5" stroke-linecap="round" filter="url(#bfp)"/></svg>
<div class="abs" style="left:.5px;top:.8px;width:55px;height:8.400px;background:#8f8f8f"></div>
<svg class="ic" style="left:112px;top:12px" width="9" height="9" viewBox="0 0 9 9"><rect x="3" y="4.500" width="5.500" height="4" fill="#e2e2e2"/><path d="M1,4.500 V3 a1.600,1.600 0 0,1 3.200,0 V4.500" fill="none" stroke="#e2e2e2" stroke-width=".9"/></svg>
</div>
<div class="t" style="left:1014.7px;top:173.3px;font-size:7.8px;line-height:9.4px;color:#f4f4f4;"><span class="sx" style="--s:0.818">Opaque watercolor</span></div>
<div class="abs" style="left:1013.800px;top:196px;width:118.200px;height:68.500px;background:#454545"></div>
<div class="t" style="left:1023.8px;top:197.7px;font-size:7.8px;line-height:9.4px;color:#e8e8e8;"><span class="sx" style="--s:0.793">Brush Size</span></div>
<div class="abs" style="left:1035.500px;top:208.2px;width:50px;height:2.400px;background:#3a3a3a;border-bottom:.7px solid #666"></div>
<div class="abs" style="left:1035.500px;top:208.0px;width:27.5px;height:2.200px;background:#707070"></div>
<div class="tr" style="right:253.3px;top:201.8px;font-size:7.8px;line-height:9.4px;color:#e8e8e8;"><span class="sx" style="--s:0.843;transform-origin:100% 50%">30.0</span></div>
<svg class="ic" style="left:1114px;top:202.5px" width="5" height="3" viewBox="0 0 5 3"><path d="M0.500,2.5 L2.5,0.500 L4.5,2.5" fill="none" stroke="#c8c8c8" stroke-width=".9"/></svg><svg class="ic" style="left:1114px;top:207.5px" width="5" height="3" viewBox="0 0 5 3"><path d="M0.500,0.500 L2.5,2.5 L4.5,0.500" fill="none" stroke="#c8c8c8" stroke-width=".9"/></svg>
<div class="abs" style="left:1019px;top:213.2px;width:100px;height:.7px;background:#5e5e5e"></div>
<div class="abs" style="left:1121.200px;top:198.6px;width:8.200px;height:13.600px;background:#565656;border:.6px solid #6a6a6a"></div>
<svg class="ic" style="left:1122.700px;top:201.2px" width="6" height="8" viewBox="0 0 6 8"><path d="M.5,2 L2.500,4 L5.500,.5 M.5,5 L2.500,7 L5.500,3.500" fill="none" stroke="#cfcfcf" stroke-width=".8"/></svg>
<div class="t" style="left:1023.8px;top:214.1px;font-size:7.8px;line-height:9.4px;color:#e8e8e8;"><span class="sx" style="--s:0.809">Amount of paint</span></div>
<div class="abs" style="left:1035.500px;top:224.6px;width:50px;height:2.400px;background:#3a3a3a;border-bottom:.7px solid #666"></div>
<div class="abs" style="left:1035.500px;top:224.4px;width:30.0px;height:2.200px;background:#707070"></div>
<div class="tr" style="right:253.3px;top:218.2px;font-size:7.8px;line-height:9.4px;color:#e8e8e8;"><span class="sx" style="--s:0.865;transform-origin:100% 50%">60</span></div>
<svg class="ic" style="left:1114px;top:218.95px" width="5" height="3" viewBox="0 0 5 3"><path d="M0.500,2.5 L2.5,0.500 L4.5,2.5" fill="none" stroke="#c8c8c8" stroke-width=".9"/></svg><svg class="ic" style="left:1114px;top:223.95px" width="5" height="3" viewBox="0 0 5 3"><path d="M0.500,0.500 L2.5,2.5 L4.5,0.500" fill="none" stroke="#c8c8c8" stroke-width=".9"/></svg>
<div class="abs" style="left:1019px;top:229.6px;width:100px;height:.7px;background:#5e5e5e"></div>
<div class="abs" style="left:1121.200px;top:215.0px;width:8.200px;height:13.600px;background:#565656;border:.6px solid #6a6a6a"></div>
<svg class="ic" style="left:1122.700px;top:217.6px" width="6" height="8" viewBox="0 0 6 8"><path d="M.5,2 L2.500,4 L5.500,.5 M.5,5 L2.500,7 L5.500,3.500" fill="none" stroke="#cfcfcf" stroke-width=".8"/></svg>
<div class="t" style="left:1023.8px;top:230.6px;font-size:7.8px;line-height:9.4px;color:#e8e8e8;"><span class="sx" style="--s:0.813">Density of paint</span></div>
<div class="abs" style="left:1035.500px;top:241.1px;width:50px;height:2.400px;background:#3a3a3a;border-bottom:.7px solid #666"></div>
<div class="abs" style="left:1035.500px;top:240.9px;width:15.0px;height:2.200px;background:#707070"></div>
<div class="tr" style="right:253.3px;top:234.7px;font-size:7.8px;line-height:9.4px;color:#e8e8e8;"><span class="sx" style="--s:0.865;transform-origin:100% 50%">30</span></div>
<svg class="ic" style="left:1114px;top:235.4px" width="5" height="3" viewBox="0 0 5 3"><path d="M0.500,2.5 L2.5,0.500 L4.5,2.5" fill="none" stroke="#c8c8c8" stroke-width=".9"/></svg><svg class="ic" style="left:1114px;top:240.4px" width="5" height="3" viewBox="0 0 5 3"><path d="M0.500,0.500 L2.5,2.5 L4.5,0.500" fill="none" stroke="#c8c8c8" stroke-width=".9"/></svg>
<div class="abs" style="left:1019px;top:246.1px;width:100px;height:.7px;background:#5e5e5e"></div>
<div class="abs" style="left:1121.200px;top:231.5px;width:8.200px;height:13.600px;background:#565656;border:.6px solid #6a6a6a"></div>
<svg class="ic" style="left:1122.700px;top:235.1px" width="6" height="6" viewBox="0 0 6 6"><path d="M3,.8 L5.500,5.200 H.5 Z" fill="none" stroke="#cfcfcf" stroke-width=".8"/></svg>
<div class="t" style="left:1023.8px;top:247.0px;font-size:7.8px;line-height:9.4px;color:#e8e8e8;"><span class="sx" style="--s:0.805">Color stretch</span></div>
<div class="abs" style="left:1035.500px;top:257.5px;width:50px;height:2.400px;background:#3a3a3a;border-bottom:.7px solid #666"></div>
<div class="abs" style="left:1035.500px;top:257.3px;width:20.0px;height:2.200px;background:#707070"></div>
<div class="tr" style="right:253.3px;top:251.2px;font-size:7.8px;line-height:9.4px;color:#e8e8e8;"><span class="sx" style="--s:0.865;transform-origin:100% 50%">40</span></div>
<svg class="ic" style="left:1114px;top:251.85px" width="5" height="3" viewBox="0 0 5 3"><path d="M0.500,2.5 L2.5,0.500 L4.5,2.5" fill="none" stroke="#c8c8c8" stroke-width=".9"/></svg><svg class="ic" style="left:1114px;top:256.84999999999997px" width="5" height="3" viewBox="0 0 5 3"><path d="M0.500,0.500 L2.5,2.5 L4.5,0.500" fill="none" stroke="#c8c8c8" stroke-width=".9"/></svg>
<div class="sb" style="left:1132.500px;top:196px;width:6.500px;height:68.500px"></div>
<div class="abs" style="left:1132.500px;top:196px;width:6.500px;height:8px;background:#4a4a4a"></div><svg class="ic" style="left:1133.3px;top:198.5px" width="5" height="3" viewBox="0 0 5 3"><path d="M0.500,2.5 L2.5,0.500 L4.5,2.5" fill="none" stroke="#c8c8c8" stroke-width=".9"/></svg>
<div class="abs" style="left:1133px;top:205px;width:5.500px;height:30px;background:#5a5a5a;border-radius:1px"></div>
<div class="abs" style="left:1132.500px;top:256.500px;width:6.500px;height:8px;background:#4a4a4a"></div><svg class="ic" style="left:1133.3px;top:259px" width="5" height="3" viewBox="0 0 5 3"><path d="M0.500,0.500 L2.5,2.5 L4.5,0.500" fill="none" stroke="#c8c8c8" stroke-width=".9"/></svg>
<svg class="ic" style="left:1116px;top:266px" width="24" height="10" viewBox="1116 266 24 10" fill="none" stroke="#cfcfcf" stroke-width=".9"><circle cx="1121.300" cy="271.300" r="3.600"/><path d="M1121.300,269 V271.500 L1123,272.500 M1118,267.500 L1117,269.500"/><path d="M1130,268.500 a2.200,2.200 0 1,1 2.500,2.500 L1136.500,275 L1137.500,274 L1133.500,270"/></svg>
<div class="pbg" style="left:1013.500px;top:280px;width:126.500px;height:93.500px"></div>
<div class="hdr" style="left:1013.500px;top:280.5px;width:126.500px;height:10.8px"></div>
<div class="menu3" style="left:1014.500px;top:281.5px"></div>
<div class="ptab" style="left:1026.4px;top:280.5px;width:97px;height:10.8px"></div>
<div class="t" style="left:1042px;top:281.8px;font-size:7.4px;line-height:8.9px;color:#cfcfcf;"><span class="sx" style="--s:0.769">Brush size [Opaque watercolor]</span></div>
<svg class="ic" style="left:1030.4px;top:281.0px" width="11" height="10" viewBox="0 0 11 10"><path d="M1,7.500 L2.500,4.500 L8,0.500 L9.800,2.200 L4.500,7 Z" fill="#d0d0d0"/><circle cx="7.500" cy="7.800" r="1.300" fill="none" stroke="#d0d0d0" stroke-width=".8"/></svg>
<div class="abs" style="left:1014px;top:292.500px;width:118px;height:80.500px;background:#2b2b2b;overflow:hidden">
<div class="abs" style="left:0.5px;top:0.5px;width:18.800px;height:23.400px;background:#3b3b3b;overflow:hidden">
<div class="abs" style="left:8.6px;top:8.5px;width:1.6px;height:1.6px;border-radius:50%;background:#fff"></div>
<div class="t" style="left:0;width:18.800px;text-align:center;top:14.3px;font-size:7.600px;color:#dedede">4</div>
</div>
<div class="abs" style="left:20.1px;top:0.5px;width:18.800px;height:23.400px;background:#3b3b3b;overflow:hidden">
<div class="abs" style="left:8.4px;top:8.3px;width:2.0px;height:2.0px;border-radius:50%;background:#fff"></div>
<div class="t" style="left:0;width:18.800px;text-align:center;top:14.3px;font-size:7.600px;color:#dedede">5</div>
</div>
<div class="abs" style="left:39.7px;top:0.5px;width:18.800px;height:23.400px;background:#3b3b3b;overflow:hidden">
<div class="abs" style="left:8.1px;top:8.0px;width:2.6px;height:2.6px;border-radius:50%;background:#fff"></div>
<div class="t" style="left:0;width:18.800px;text-align:center;top:14.3px;font-size:7.600px;color:#dedede">6</div>
</div>
<div class="abs" style="left:59.3px;top:0.5px;width:18.800px;height:23.400px;background:#3b3b3b;overflow:hidden">
<div class="abs" style="left:7.8px;top:7.7px;width:3.2px;height:3.2px;border-radius:50%;background:#fff"></div>
<div class="t" style="left:0;width:18.800px;text-align:center;top:14.3px;font-size:7.600px;color:#dedede">7</div>
</div>
<div class="abs" style="left:78.9px;top:0.5px;width:18.800px;height:23.400px;background:#3b3b3b;overflow:hidden">
<div class="abs" style="left:7.5px;top:7.4px;width:3.8px;height:3.8px;border-radius:50%;background:#fff"></div>
<div class="t" style="left:0;width:18.800px;text-align:center;top:14.3px;font-size:7.600px;color:#dedede">8</div>
</div>
<div class="abs" style="left:98.5px;top:0.5px;width:18.800px;height:23.400px;background:#3b3b3b;overflow:hidden">
<div class="abs" style="left:6.8px;top:6.7px;width:5.2px;height:5.2px;border-radius:50%;background:#fff"></div>
<div class="t" style="left:0;width:18.800px;text-align:center;top:14.3px;font-size:7.600px;color:#dedede">10</div>
</div>
<div class="abs" style="left:0.5px;top:24.7px;width:18.800px;height:23.400px;background:#3b3b3b;overflow:hidden">
<div class="abs" style="left:6.1px;top:6.0px;width:6.6px;height:6.6px;border-radius:50%;background:#fff"></div>
<div class="t" style="left:0;width:18.800px;text-align:center;top:14.3px;font-size:7.600px;color:#dedede">12</div>
</div>
<div class="abs" style="left:20.1px;top:24.7px;width:18.800px;height:23.400px;background:#3b3b3b;overflow:hidden">
<div class="abs" style="left:5.3px;top:5.2px;width:8.2px;height:8.2px;border-radius:50%;background:#fff"></div>
<div class="t" style="left:0;width:18.800px;text-align:center;top:14.3px;font-size:7.600px;color:#dedede">15</div>
</div>
<div class="abs" style="left:39.7px;top:24.7px;width:18.800px;height:23.400px;background:#3b3b3b;overflow:hidden">
<div class="abs" style="left:4.5px;top:4.4px;width:9.8px;height:9.8px;border-radius:50%;background:#fff"></div>
<div class="t" style="left:0;width:18.800px;text-align:center;top:14.3px;font-size:7.600px;color:#dedede">17</div>
</div>
<div class="abs" style="left:59.3px;top:24.7px;width:18.800px;height:23.400px;background:#3b3b3b;overflow:hidden">
<div class="abs" style="left:3.6px;top:3.5px;width:11.6px;height:11.6px;border-radius:50%;background:#fff"></div>
<div class="abs" style="left:0;top:14.2px;width:18.800px;height:10px;background:rgba(59,59,59,.42)"></div>
<div class="t" style="left:0;width:18.800px;text-align:center;top:14.3px;font-size:7.600px;color:#dedede">20</div>
</div>
<div class="abs" style="left:78.9px;top:24.7px;width:18.800px;height:23.400px;background:#3b3b3b;overflow:hidden">
<div class="abs" style="left:2.3px;top:2.2px;width:14.2px;height:14.2px;border-radius:50%;background:#fff"></div>
<div class="abs" style="left:0;top:14.2px;width:18.800px;height:10px;background:rgba(59,59,59,.42)"></div>
<div class="t" style="left:0;width:18.800px;text-align:center;top:14.3px;font-size:7.600px;color:#dedede">25</div>
</div>
<div class="abs" style="left:98.5px;top:24.7px;width:18.800px;height:23.400px;background:#646f88;overflow:hidden">
<div class="abs" style="left:1.9px;top:1.8px;width:15.0px;height:15.0px;border-radius:50%;background:#fff"></div>
<div class="abs" style="left:0;top:14.2px;width:18.800px;height:10px;background:rgba(90,100,125,.42)"></div>
<div class="t" style="left:0;width:18.800px;text-align:center;top:14.3px;font-size:7.600px;color:#dedede">30</div>
</div>
<div class="abs" style="left:0.5px;top:48.9px;width:18.800px;height:23.400px;background:#3b3b3b;overflow:hidden">
<div class="abs" style="left:2.0px;top:2.2px;width:14.8px;height:14.8px;border-radius:50%;background:#fff"></div>
<div class="abs" style="left:0;top:14.5px;width:18.800px;height:10px;background:rgba(59,59,59,.42)"></div>
<div class="t" style="left:0;width:18.800px;text-align:center;top:15px;font-size:7.600px;color:#dedede">40</div>
</div>
<div class="abs" style="left:20.1px;top:48.9px;width:18.800px;height:23.400px;background:#3b3b3b;overflow:hidden">
<div class="abs" style="left:2.0px;top:2.2px;width:14.8px;height:14.8px;border-radius:50%;background:#fff"></div>
<div class="abs" style="left:0;top:14.5px;width:18.800px;height:10px;background:rgba(59,59,59,.42)"></div>
<div class="t" style="left:0;width:18.800px;text-align:center;top:15px;font-size:7.600px;color:#dedede">50</div>
</div>
<div class="abs" style="left:39.7px;top:48.9px;width:18.800px;height:23.400px;background:#3b3b3b;overflow:hidden">
<div class="abs" style="left:2.0px;top:2.2px;width:14.8px;height:14.8px;border-radius:50%;background:#fff"></div>
<div class="abs" style="left:0;top:14.5px;width:18.800px;height:10px;background:rgba(59,59,59,.42)"></div>
<div class="t" style="left:0;width:18.800px;text-align:center;top:15px;font-size:7.600px;color:#dedede">60</div>
</div>
<div class="abs" style="left:59.3px;top:48.9px;width:18.800px;height:23.400px;background:#3b3b3b;overflow:hidden">
<div class="abs" style="left:2.0px;top:2.2px;width:14.8px;height:14.8px;border-radius:50%;background:#fff"></div>
<div class="abs" style="left:0;top:14.5px;width:18.800px;height:10px;background:rgba(59,59,59,.42)"></div>
<div class="t" style="left:0;width:18.800px;text-align:center;top:15px;font-size:7.600px;color:#dedede">70</div>
</div>
<div class="abs" style="left:78.9px;top:48.9px;width:18.800px;height:23.400px;background:#3b3b3b;overflow:hidden">
<div class="abs" style="left:2.0px;top:2.2px;width:14.8px;height:14.8px;border-radius:50%;background:#fff"></div>
<div class="abs" style="left:0;top:14.5px;width:18.800px;height:10px;background:rgba(59,59,59,.42)"></div>
<div class="t" style="left:0;width:18.800px;text-align:center;top:15px;font-size:7.600px;color:#dedede">80</div>
</div>
<div class="abs" style="left:98.5px;top:48.9px;width:18.800px;height:23.400px;background:#3b3b3b;overflow:hidden">
<div class="abs" style="left:2.0px;top:2.2px;width:14.8px;height:14.8px;border-radius:50%;background:#fff"></div>
<div class="abs" style="left:0;top:14.5px;width:18.800px;height:10px;background:rgba(59,59,59,.42)"></div>
<div class="t" style="left:0;width:18.800px;text-align:center;top:15px;font-size:7.600px;color:#dedede">100</div>
</div>
<div class="abs" style="left:0.5px;top:73.1px;width:18.800px;height:23.400px;background:#3b3b3b;overflow:hidden">
<div class="abs" style="left:2.0px;top:2.2px;width:14.8px;height:14.8px;border-radius:50%;background:#fff"></div>
<div class="abs" style="left:0;top:14.5px;width:18.800px;height:10px;background:rgba(59,59,59,.42)"></div>
<div class="t" style="left:0;width:18.800px;text-align:center;top:15px;font-size:7.600px;color:#dedede">120</div>
</div>
<div class="abs" style="left:20.1px;top:73.1px;width:18.800px;height:23.400px;background:#3b3b3b;overflow:hidden">
<div class="abs" style="left:2.0px;top:2.2px;width:14.8px;height:14.8px;border-radius:50%;background:#fff"></div>
<div class="abs" style="left:0;top:14.5px;width:18.800px;height:10px;background:rgba(59,59,59,.42)"></div>
<div class="t" style="left:0;width:18.800px;text-align:center;top:15px;font-size:7.600px;color:#dedede">150</div>
</div>
<div class="abs" style="left:39.7px;top:73.1px;width:18.800px;height:23.400px;background:#3b3b3b;overflow:hidden">
<div class="abs" style="left:2.0px;top:2.2px;width:14.8px;height:14.8px;border-radius:50%;background:#fff"></div>
<div class="abs" style="left:0;top:14.5px;width:18.800px;height:10px;background:rgba(59,59,59,.42)"></div>
<div class="t" style="left:0;width:18.800px;text-align:center;top:15px;font-size:7.600px;color:#dedede">170</div>
</div>
<div class="abs" style="left:59.3px;top:73.1px;width:18.800px;height:23.400px;background:#3b3b3b;overflow:hidden">
<div class="abs" style="left:2.0px;top:2.2px;width:14.8px;height:14.8px;border-radius:50%;background:#fff"></div>
<div class="abs" style="left:0;top:14.5px;width:18.800px;height:10px;background:rgba(59,59,59,.42)"></div>
<div class="t" style="left:0;width:18.800px;text-align:center;top:15px;font-size:7.600px;color:#dedede">200</div>
</div>
<div class="abs" style="left:78.9px;top:73.1px;width:18.800px;height:23.400px;background:#3b3b3b;overflow:hidden">
<div class="abs" style="left:2.0px;top:2.2px;width:14.8px;height:14.8px;border-radius:50%;background:#fff"></div>
<div class="abs" style="left:0;top:14.5px;width:18.800px;height:10px;background:rgba(59,59,59,.42)"></div>
<div class="t" style="left:0;width:18.800px;text-align:center;top:15px;font-size:7.600px;color:#dedede">250</div>
</div>
<div class="abs" style="left:98.5px;top:73.1px;width:18.800px;height:23.400px;background:#3b3b3b;overflow:hidden">
<div class="abs" style="left:2.0px;top:2.2px;width:14.8px;height:14.8px;border-radius:50%;background:#fff"></div>
<div class="abs" style="left:0;top:14.5px;width:18.800px;height:10px;background:rgba(59,59,59,.42)"></div>
<div class="t" style="left:0;width:18.800px;text-align:center;top:15px;font-size:7.600px;color:#dedede">300</div>
</div>
</div>
<div class="sb" style="left:1132px;top:292.500px;width:7px;height:80.500px"></div>
<div class="abs" style="left:1132px;top:292.500px;width:7px;height:8px;background:#4a4a4a"></div><svg class="ic" style="left:1133px;top:295px" width="5" height="3" viewBox="0 0 5 3"><path d="M0.500,2.5 L2.5,0.500 L4.5,2.5" fill="none" stroke="#c8c8c8" stroke-width=".9"/></svg>
<div class="abs" style="left:1132.500px;top:309.700px;width:6px;height:29.500px;background:#5a5a5a;border-radius:1px"></div>
<div class="abs" style="left:1132px;top:365px;width:7px;height:8px;background:#4a4a4a"></div><svg class="ic" style="left:1133px;top:367.5px" width="5" height="3" viewBox="0 0 5 3"><path d="M0.500,0.500 L2.5,2.5 L4.5,0.500" fill="none" stroke="#c8c8c8" stroke-width=".9"/></svg>
<div class="pbg" style="left:1013.500px;top:375.500px;width:126.500px;height:157px;background:#4f4f4f"></div>
<div class="hdr" style="left:1013.500px;top:375.800px;width:126.500px;height:10.800px"></div>
<div class="menu3" style="left:1014.500px;top:376.800px"></div>
<div class="ptab" style="left:1025.500px;top:375.800px;width:40.200px;height:10.800px;line-height:10.800px;padding-left:17px"><span class="sx" style="--s:.9">Color Wheel</span></div>
<svg class="ic" style="left:1029px;top:376.500px" width="10" height="10" viewBox="0 0 10 10"><circle cx="5" cy="5" r="4" fill="none" stroke="#d8d8d8" stroke-width=".9"/><rect x="3.300" y="3.300" width="3.400" height="3.400" fill="#d8d8d8"/></svg>
<div class="abs" style="left:1067px;top:375.800px;width:17.300px;height:10.800px;background:#505050"></div>
<div class="abs" style="left:1085.5px;top:375.800px;width:17.300px;height:10.800px;background:#505050"></div>
<div class="abs" style="left:1104px;top:375.800px;width:17.300px;height:10.800px;background:#505050"></div>
<div class="abs" style="left:1122.3px;top:375.800px;width:17.300px;height:10.800px;background:#505050"></div>
<svg class="ic" style="left:1067px;top:375.800px" width="73" height="11" viewBox="1067 375.800 73 11" fill="none" stroke="#8e8e8e" stroke-width=".9"><path d="M1071,379 H1081 M1071,383 H1081 M1078,377.500 V380.500 M1074,381.500 V384.500"/><path d="M1091,378 V385 M1097,378 V385 M1089.500,380 H1092.500 M1095.500,382.500 H1098.500 M1093,379 H1095"/><path d="M1108.500,386 V380.500 L1110,379 H1116.500 V386 M1108.500,381.500 H1116.500"/><path d="M1126,379 H1136.500 V384.500 H1126 Z M1126,381 H1136.500 M1129.500,379 V384.500 M1133,379 V384.500" stroke="#a5a5a5"/></svg>
<div class="abs" style="left:1014.3px;top:393.5px;width:124.8px;height:124.8px;border-radius:50%;background:conic-gradient(from 0deg,#ffee00,#00e620 60deg,#00e8e8 120deg,#0020ff 180deg,#ee00ee 240deg,#ff1a1a 300deg,#ffee00 360deg)"></div>
<div class="abs" style="left:1025.3px;top:404.5px;width:102.8px;height:102.8px;border-radius:50%;background:#4f4f4f"></div>
<div class="abs" style="left:1042.900px;top:421.400px;width:67.700px;height:67.700px;background:linear-gradient(to top,#000,rgba(0,0,0,0)),linear-gradient(to right,#fff,#0f33ee)"></div>
<div class="abs" style="left:1050.600px;top:439.600px;width:5px;height:5px;border-radius:50%;border:.8px solid #e8e8e8;box-shadow:0 0 0 .5px #444"></div>
<div class="abs" style="left:1085.400px;top:507px;width:4.400px;height:9.500px;border:1.100px solid #fff;transform:rotate(-11deg);box-shadow:0 0 0 .5px #333"></div>
<div class="abs" style="left:1022.700px;top:509px;width:11.600px;height:11px;background:#000;border:.7px solid #555"></div>
<div class="abs" style="left:1013.700px;top:501.300px;width:13.800px;height:13.100px;background:#8f9dc0;border:1px solid #7688b6;border-radius:2px"></div>
<svg class="ic" style="left:1014px;top:523.500px" width="21" height="6" viewBox="0 0 21 6"><rect x=".4" y=".4" width="20.200" height="5.200" rx="2.600" fill="#3a3a3a" stroke="#666" stroke-width=".5"/><g fill="none" stroke="#fff" stroke-width="1"><circle cx="4" cy="3" r="1.800"/><circle cx="10.500" cy="3" r="1.800"/><circle cx="17" cy="3" r="1.800"/></g></svg>
<div class="t" style="left:1072px;top:522.2px;font-size:7.6px;line-height:9.1px;color:#e4e4e4;"><span class="sx" style="--s:0.868">229</span></div>
<div class="t" style="left:1094px;top:522.2px;font-size:7.6px;line-height:9.1px;color:#e4e4e4;"><span class="sx" style="--s:0.781">16</span></div>
<div class="t" style="left:1112.8px;top:522.2px;font-size:7.6px;line-height:9.1px;color:#e4e4e4;"><span class="sx" style="--s:0.852">69</span></div>
<div class="abs" style="left:1066px;top:524.500px;width:4.500px;height:4.500px;background:#bdbdbd"></div>
<div class="abs" style="left:1086px;top:524.500px;width:4.500px;height:4.500px;background:#bdbdbd"></div>
<div class="abs" style="left:1105.5px;top:524.500px;width:4.500px;height:4.500px;background:#bdbdbd"></div>
<svg class="ic" style="left:1127px;top:519.500px" width="10" height="10" viewBox="0 0 10 10"><circle cx="5" cy="5" r="4" fill="none" stroke="#d0d0d0" stroke-width=".9"/><path d="M3.600,2.500 V7.500 M3.600,2.800 L7.300,5 L3.600,7.200" fill="none" stroke="#d0d0d0" stroke-width=".8"/></svg>
<div class="pbg" style="left:1013.500px;top:535.500px;width:126.500px;height:94.500px"></div>
<div class="hdr" style="left:1013.500px;top:535.600px;width:126.500px;height:10.600px"></div>
<div class="menu3" style="left:1014.500px;top:536.300px"></div>
<div class="ptab" style="left:1026.800px;top:535.600px;width:40.400px;height:10.600px"></div>
<div class="t" style="left:1042px;top:536.8px;font-size:7.4px;line-height:8.9px;color:#cfcfcf;"><span class="sx" style="--s:0.778">Color Set</span></div>
<svg class="ic" style="left:1029px;top:536.300px" width="10" height="9.500" viewBox="0 0 10 9.500"><rect x=".5" y=".5" width="9" height="8.500" rx="1.500" fill="#c9c9c9"/><rect x="2" y="2.500" width="2.300" height="2.300" fill="#555"/><rect x="5" y="2.500" width="2.300" height="2.300" fill="#777"/><rect x="2" y="5.400" width="2.300" height="2.300" fill="#777"/><rect x="5" y="5.400" width="2.300" height="2.300" fill="#444"/></svg>
<div class="abs" style="left:1013.500px;top:547.300px;width:102px;height:11.500px;background:#676767;border-radius:1px"></div>
<div class="t" style="left:1034.8px;top:548.5px;font-size:7.8px;line-height:9.4px;color:#eaeaea;"><span class="sx" style="--s:0.82">Standard color set</span></div><svg class="ic" style="left:1108px;top:551.5px" width="5" height="3" viewBox="0 0 5 3"><path d="M0.500,0.500 L2.5,2.5 L4.5,0.500" fill="none" stroke="#ddd" stroke-width=".9"/></svg>
<svg class="ic" style="left:1116px;top:547px" width="24" height="12" viewBox="1116 547 24 12" fill="none" stroke="#cfcfcf" stroke-width=".9"><path d="M1118,550.500 a2.300,2.300 0 1,1 2.600,2.600 L1125,557.500 L1126,556.500 L1121.600,552.100"/><path d="M1130,552 V557.500 H1137.500 V550 H1135.500 M1130,552 V550 H1132 M1133.700,548.500 V554.500 M1132,553 L1133.700,554.700 L1135.400,553"/></svg>
<div class="abs" style="left:1014.500px;top:559.500px;width:117.300px;height:59.200px;background:#6e6e6e"></div>
<div class="abs" style="left:1014.8px;top:559.8px;width:6.7px;height:6.8px;background:#000000"></div>
<div class="abs" style="left:1022.1px;top:559.8px;width:6.7px;height:6.8px;background:#ffffff"></div>
<div class="abs" style="left:1029.4px;top:559.8px;width:6.7px;height:6.8px;background:conic-gradient(#bbb 25%,#fff 0 50%,#bbb 0 75%,#fff 0);background-size:3.400px 3.400px"></div>
<div class="abs" style="left:1036.7px;top:559.8px;width:6.7px;height:6.8px;background:#000000"></div>
<div class="abs" style="left:1044.0px;top:559.8px;width:6.7px;height:6.8px;background:#1c1c20"></div>
<div class="abs" style="left:1051.4px;top:559.8px;width:6.7px;height:6.8px;background:#29292b"></div>
<div class="abs" style="left:1058.7px;top:559.8px;width:6.7px;height:6.8px;background:#343434"></div>
<div class="abs" style="left:1066.0px;top:559.8px;width:6.7px;height:6.8px;background:#484848"></div>
<div class="abs" style="left:1073.3px;top:559.8px;width:6.7px;height:6.8px;background:#6a6a6a"></div>
<div class="abs" style="left:1080.6px;top:559.8px;width:6.7px;height:6.8px;background:#848484"></div>
<div class="abs" style="left:1087.9px;top:559.8px;width:6.7px;height:6.8px;background:#979797"></div>
<div class="abs" style="left:1095.2px;top:559.8px;width:6.7px;height:6.8px;background:#a9a9a9"></div>
<div class="abs" style="left:1102.5px;top:559.8px;width:6.7px;height:6.8px;background:#c2c2c2"></div>
<div class="abs" style="left:1109.9px;top:559.8px;width:6.7px;height:6.8px;background:#d3d3d3"></div>
<div class="abs" style="left:1117.2px;top:559.8px;width:6.7px;height:6.8px;background:#e1e1e1"></div>
<div class="abs" style="left:1124.5px;top:559.8px;width:6.7px;height:6.8px;background:#f3f3f3"></div>
<div class="abs" style="left:1014.8px;top:567.1px;width:6.7px;height:6.8px;background:#ff0000"></div>
<div class="abs" style="left:1022.1px;top:567.1px;width:6.7px;height:6.8px;background:#ffff00"></div>
<div class="abs" style="left:1029.4px;top:567.1px;width:6.7px;height:6.8px;background:#00ff00"></div>
<div class="abs" style="left:1036.7px;top:567.1px;width:6.7px;height:6.8px;background:#00ffff"></div>
<div class="abs" style="left:1044.0px;top:567.1px;width:6.7px;height:6.8px;background:#0000ff"></div>
<div class="abs" style="left:1051.4px;top:567.1px;width:6.7px;height:6.8px;background:#ff00ff"></div>
<div class="abs" style="left:1058.7px;top:567.1px;width:6.7px;height:6.8px;background:#3a3a48"></div>
<div class="abs" style="left:1066.0px;top:567.1px;width:6.7px;height:6.8px;background:#5a6070"></div>
<div class="abs" style="left:1073.3px;top:567.1px;width:6.7px;height:6.8px;background:#8a94b0"></div>
<div class="abs" style="left:1080.6px;top:567.1px;width:6.7px;height:6.8px;background:#b0b8d8"></div>
<div class="abs" style="left:1087.9px;top:567.1px;width:6.7px;height:6.8px;background:#c8d0ec"></div>
<div class="abs" style="left:1095.2px;top:567.1px;width:6.7px;height:6.8px;background:#2b2b2b"></div>
<div class="abs" style="left:1102.5px;top:567.1px;width:6.7px;height:6.8px;background:#5a5040"></div>
<div class="abs" style="left:1109.9px;top:567.1px;width:6.7px;height:6.8px;background:#6a5a48"></div>
<div class="abs" style="left:1117.2px;top:567.1px;width:6.7px;height:6.8px;background:#d0a898"></div>
<div class="abs" style="left:1124.5px;top:567.1px;width:6.7px;height:6.8px;background:#c8a898"></div>
<div class="abs" style="left:1014.8px;top:574.5px;width:6.7px;height:6.8px;background:#ff9eab"></div>
<div class="abs" style="left:1022.1px;top:574.5px;width:6.7px;height:6.8px;background:#ffc19e"></div>
<div class="abs" style="left:1029.4px;top:574.5px;width:6.7px;height:6.8px;background:#ffde9e"></div>
<div class="abs" style="left:1036.7px;top:574.5px;width:6.7px;height:6.8px;background:#fffb9e"></div>
<div class="abs" style="left:1044.0px;top:574.5px;width:6.7px;height:6.8px;background:#d6ff9e"></div>
<div class="abs" style="left:1051.4px;top:574.5px;width:6.7px;height:6.8px;background:#9effae"></div>
<div class="abs" style="left:1058.7px;top:574.5px;width:6.7px;height:6.8px;background:#9effe6"></div>
<div class="abs" style="left:1066.0px;top:574.5px;width:6.7px;height:6.8px;background:#9edeff"></div>
<div class="abs" style="left:1073.3px;top:574.5px;width:6.7px;height:6.8px;background:#9ebbff"></div>
<div class="abs" style="left:1080.6px;top:574.5px;width:6.7px;height:6.8px;background:#ae9eff"></div>
<div class="abs" style="left:1087.9px;top:574.5px;width:6.7px;height:6.8px;background:#d19eff"></div>
<div class="abs" style="left:1095.2px;top:574.5px;width:6.7px;height:6.8px;background:#f69eff"></div>
<div class="abs" style="left:1102.5px;top:574.5px;width:6.7px;height:6.8px;background:#ff9edb"></div>
<div class="abs" style="left:1109.9px;top:574.5px;width:6.7px;height:6.8px;background:#ff9ebe"></div>
<div class="abs" style="left:1117.2px;top:574.5px;width:6.7px;height:6.8px;background:#ffe2d8"></div>
<div class="abs" style="left:1124.5px;top:574.5px;width:6.7px;height:6.8px;background:#ffe0d0"></div>
<div class="abs" style="left:1014.8px;top:581.8px;width:6.7px;height:6.8px;background:#ef5f73"></div>
<div class="abs" style="left:1022.1px;top:581.8px;width:6.7px;height:6.8px;background:#ef945f"></div>
<div class="abs" style="left:1029.4px;top:581.8px;width:6.7px;height:6.8px;background:#efbf5f"></div>
<div class="abs" style="left:1036.7px;top:581.8px;width:6.7px;height:6.8px;background:#efea5f"></div>
<div class="abs" style="left:1044.0px;top:581.8px;width:6.7px;height:6.8px;background:#b3ef5f"></div>
<div class="abs" style="left:1051.4px;top:581.8px;width:6.7px;height:6.8px;background:#5fef77"></div>
<div class="abs" style="left:1058.7px;top:581.8px;width:6.7px;height:6.8px;background:#5fefcb"></div>
<div class="abs" style="left:1066.0px;top:581.8px;width:6.7px;height:6.8px;background:#5fbfef"></div>
<div class="abs" style="left:1073.3px;top:581.8px;width:6.7px;height:6.8px;background:#5f8bef"></div>
<div class="abs" style="left:1080.6px;top:581.8px;width:6.7px;height:6.8px;background:#775fef"></div>
<div class="abs" style="left:1087.9px;top:581.8px;width:6.7px;height:6.8px;background:#ac5fef"></div>
<div class="abs" style="left:1095.2px;top:581.8px;width:6.7px;height:6.8px;background:#e35fef"></div>
<div class="abs" style="left:1102.5px;top:581.8px;width:6.7px;height:6.8px;background:#ef5fba"></div>
<div class="abs" style="left:1109.9px;top:581.8px;width:6.7px;height:6.8px;background:#ef5f8f"></div>
<div class="abs" style="left:1117.2px;top:581.8px;width:6.7px;height:6.8px;background:#ffd8c8"></div>
<div class="abs" style="left:1124.5px;top:581.8px;width:6.7px;height:6.8px;background:#f0c8b0"></div>
<div class="abs" style="left:1014.8px;top:589.2px;width:6.7px;height:6.8px;background:#ff1433"></div>
<div class="abs" style="left:1022.1px;top:589.2px;width:6.7px;height:6.8px;background:#ff6a14"></div>
<div class="abs" style="left:1029.4px;top:589.2px;width:6.7px;height:6.8px;background:#ffb014"></div>
<div class="abs" style="left:1036.7px;top:589.2px;width:6.7px;height:6.8px;background:#fff714"></div>
<div class="abs" style="left:1044.0px;top:589.2px;width:6.7px;height:6.8px;background:#9dff14"></div>
<div class="abs" style="left:1051.4px;top:589.2px;width:6.7px;height:6.8px;background:#14ff3b"></div>
<div class="abs" style="left:1058.7px;top:589.2px;width:6.7px;height:6.8px;background:#14ffc4"></div>
<div class="abs" style="left:1066.0px;top:589.2px;width:6.7px;height:6.8px;background:#14b0ff"></div>
<div class="abs" style="left:1073.3px;top:589.2px;width:6.7px;height:6.8px;background:#145aff"></div>
<div class="abs" style="left:1080.6px;top:589.2px;width:6.7px;height:6.8px;background:#3b14ff"></div>
<div class="abs" style="left:1087.9px;top:589.2px;width:6.7px;height:6.8px;background:#9114ff"></div>
<div class="abs" style="left:1095.2px;top:589.2px;width:6.7px;height:6.8px;background:#eb14ff"></div>
<div class="abs" style="left:1102.5px;top:589.2px;width:6.7px;height:6.8px;background:#ff14a8"></div>
<div class="abs" style="left:1109.9px;top:589.2px;width:6.7px;height:6.8px;background:#ff1462"></div>
<div class="abs" style="left:1117.2px;top:589.2px;width:6.7px;height:6.8px;background:#f8c8b0"></div>
<div class="abs" style="left:1124.5px;top:589.2px;width:6.7px;height:6.8px;background:#e8b8a0"></div>
<div class="abs" style="left:1014.8px;top:596.5px;width:6.7px;height:6.8px;background:#b23143"></div>
<div class="abs" style="left:1022.1px;top:596.5px;width:6.7px;height:6.8px;background:#b26131"></div>
<div class="abs" style="left:1029.4px;top:596.5px;width:6.7px;height:6.8px;background:#b28731"></div>
<div class="abs" style="left:1036.7px;top:596.5px;width:6.7px;height:6.8px;background:#b2ae31"></div>
<div class="abs" style="left:1044.0px;top:596.5px;width:6.7px;height:6.8px;background:#7cb231"></div>
<div class="abs" style="left:1051.4px;top:596.5px;width:6.7px;height:6.8px;background:#31b247"></div>
<div class="abs" style="left:1058.7px;top:596.5px;width:6.7px;height:6.8px;background:#31b292"></div>
<div class="abs" style="left:1066.0px;top:596.5px;width:6.7px;height:6.8px;background:#3187b2"></div>
<div class="abs" style="left:1073.3px;top:596.5px;width:6.7px;height:6.8px;background:#3158b2"></div>
<div class="abs" style="left:1080.6px;top:596.5px;width:6.7px;height:6.8px;background:#4731b2"></div>
<div class="abs" style="left:1087.9px;top:596.5px;width:6.7px;height:6.8px;background:#7631b2"></div>
<div class="abs" style="left:1095.2px;top:596.5px;width:6.7px;height:6.8px;background:#a731b2"></div>
<div class="abs" style="left:1102.5px;top:596.5px;width:6.7px;height:6.8px;background:#b23183"></div>
<div class="abs" style="left:1109.9px;top:596.5px;width:6.7px;height:6.8px;background:#b2315c"></div>
<div class="abs" style="left:1117.2px;top:596.5px;width:6.7px;height:6.8px;background:#ffc8a8"></div>
<div class="abs" style="left:1124.5px;top:596.5px;width:6.7px;height:6.8px;background:#e0a888"></div>
<div class="abs" style="left:1014.8px;top:603.9px;width:6.7px;height:6.8px;background:#70101d"></div>
<div class="abs" style="left:1022.1px;top:603.9px;width:6.7px;height:6.8px;background:#703310"></div>
<div class="abs" style="left:1029.4px;top:603.9px;width:6.7px;height:6.8px;background:#705010"></div>
<div class="abs" style="left:1036.7px;top:603.9px;width:6.7px;height:6.8px;background:#706d10"></div>
<div class="abs" style="left:1044.0px;top:603.9px;width:6.7px;height:6.8px;background:#487010"></div>
<div class="abs" style="left:1051.4px;top:603.9px;width:6.7px;height:6.8px;background:#107020"></div>
<div class="abs" style="left:1058.7px;top:603.9px;width:6.7px;height:6.8px;background:#107058"></div>
<div class="abs" style="left:1066.0px;top:603.9px;width:6.7px;height:6.8px;background:#105070"></div>
<div class="abs" style="left:1073.3px;top:603.9px;width:6.7px;height:6.8px;background:#102d70"></div>
<div class="abs" style="left:1080.6px;top:603.9px;width:6.7px;height:6.8px;background:#201070"></div>
<div class="abs" style="left:1087.9px;top:603.9px;width:6.7px;height:6.8px;background:#431070"></div>
<div class="abs" style="left:1095.2px;top:603.9px;width:6.7px;height:6.8px;background:#681070"></div>
<div class="abs" style="left:1102.5px;top:603.9px;width:6.7px;height:6.8px;background:#70104d"></div>
<div class="abs" style="left:1109.9px;top:603.9px;width:6.7px;height:6.8px;background:#701030"></div>
<div class="abs" style="left:1117.2px;top:603.9px;width:6.7px;height:6.8px;background:#ffc0a0"></div>
<div class="abs" style="left:1124.5px;top:603.9px;width:6.7px;height:6.8px;background:#d89878"></div>
<div class="abs" style="left:1014.8px;top:611.2px;width:6.7px;height:6.8px;background:#420911"></div>
<div class="abs" style="left:1022.1px;top:611.2px;width:6.7px;height:6.8px;background:#421e09"></div>
<div class="abs" style="left:1029.4px;top:611.2px;width:6.7px;height:6.8px;background:#422f09"></div>
<div class="abs" style="left:1036.7px;top:611.2px;width:6.7px;height:6.8px;background:#424009"></div>
<div class="abs" style="left:1044.0px;top:611.2px;width:6.7px;height:6.8px;background:#2a4209"></div>
<div class="abs" style="left:1051.4px;top:611.2px;width:6.7px;height:6.8px;background:#094213"></div>
<div class="abs" style="left:1058.7px;top:611.2px;width:6.7px;height:6.8px;background:#094234"></div>
<div class="abs" style="left:1066.0px;top:611.2px;width:6.7px;height:6.8px;background:#092f42"></div>
<div class="abs" style="left:1073.3px;top:611.2px;width:6.7px;height:6.8px;background:#091a42"></div>
<div class="abs" style="left:1080.6px;top:611.2px;width:6.7px;height:6.8px;background:#130942"></div>
<div class="abs" style="left:1087.9px;top:611.2px;width:6.7px;height:6.8px;background:#280942"></div>
<div class="abs" style="left:1095.2px;top:611.2px;width:6.7px;height:6.8px;background:#3d0942"></div>
<div class="abs" style="left:1102.5px;top:611.2px;width:6.7px;height:6.8px;background:#42092d"></div>
<div class="abs" style="left:1109.9px;top:611.2px;width:6.7px;height:6.8px;background:#42091c"></div>
<div class="abs" style="left:1117.2px;top:611.2px;width:6.7px;height:6.8px;background:#f0b090"></div>
<div class="abs" style="left:1124.5px;top:611.2px;width:6.7px;height:6.8px;background:#c88868"></div>
<div class="abs" style="left:1030.400px;top:560.500px;width:5.500px;height:5.500px;border-radius:50%;border:.9px solid #fff;box-shadow:0 0 0 .5px #222"></div>
<div class="sb" style="left:1132.300px;top:559.500px;width:7px;height:59.200px"></div>
<div class="abs" style="left:1132.300px;top:559.500px;width:7px;height:8px;background:#4a4a4a"></div><svg class="ic" style="left:1133.3px;top:562px" width="5" height="3" viewBox="0 0 5 3"><path d="M0.500,2.5 L2.5,0.500 L4.5,2.5" fill="none" stroke="#c8c8c8" stroke-width=".9"/></svg>
<div class="abs" style="left:1132.800px;top:569px;width:6px;height:36px;background:#5a5a5a;border-radius:1px"></div>
<div class="abs" style="left:1132.300px;top:610.700px;width:7px;height:8px;background:#4a4a4a"></div><svg class="ic" style="left:1133.3px;top:613.2px" width="5" height="3" viewBox="0 0 5 3"><path d="M0.500,0.500 L2.5,2.5 L4.5,0.500" fill="none" stroke="#c8c8c8" stroke-width=".9"/></svg>
<div class="abs" style="left:1014.8px;top:624.500px;width:4.500px;height:4.500px;background:#b8121c"></div>
<div class="abs" style="left:1034.2px;top:624.500px;width:4.500px;height:4.500px;background:#1e9a1e"></div>
<div class="abs" style="left:1053.8px;top:624.500px;width:4.500px;height:4.500px;background:#1a1aa8"></div>
<svg class="ic" style="left:1102px;top:620px" width="38" height="10" viewBox="1102 620 38 10" fill="none" stroke="#6c6c6c" stroke-width=".9"><path d="M1106,622 H1111 L1112.500,623.500 V629 H1106 Z M1109,623.500 V627"/><path d="M1121,621.500 Q1117,626 1118.500,628 Q1121,630 1123.500,628 Q1125,626 1121,621.500 Z" stroke="#8c8c8c"/><circle cx="1124.500" cy="628" r="1.500" stroke="#8c8c8c"/><path d="M1131,623.500 H1137 M1133,623.500 V622.300 H1135 V623.500 M1131.700,623.500 L1132.200,629.500 H1135.800 L1136.300,623.500"/></svg>

<!-- rightcol.html -->
<div class="abs" style="left:1140px;top:43px;width:25.500px;height:587px;background:#3a3a3a"></div>
<div class="sbtn" style="left:1143.200px;top:43.3px"></div>
<svg class="ic" style="left:1143.200px;top:43.3px" width="19" height="17.700" viewBox="0 0 19 18" fill="none" stroke="#cfcfcf" stroke-width=".95"><circle cx="9.500" cy="9" r="4.200"/><path d="M8,7.500 L11,10.500 M11,8 V10.500 H8.500 M12.500,12 L14,13.500"/></svg>
<div class="sbtn" style="left:1143.200px;top:65.2px"></div>
<svg class="ic" style="left:1143.200px;top:65.2px" width="19" height="17.700" viewBox="0 0 19 18" fill="none" stroke="#cfcfcf" stroke-width=".95"><path d="M4,5 V14 H15 V6.500 H9.500 L8.500,5 Z"/><path d="M7,8 H12 V12.500 H7 Z M9.500,8 V12.500 M7,10.200 H12" stroke-width=".7"/></svg>
<div class="sbtn" style="left:1143.200px;top:87.2px"></div>
<svg class="ic" style="left:1143.200px;top:87.2px" width="19" height="17.700" viewBox="0 0 19 18" fill="none" stroke="#cfcfcf" stroke-width=".95"><path d="M4,5 V14 H15 V6.500 H9.500 L8.500,5 Z"/><rect x="7" y="8" width="5.500" height="4.500"/><rect x="8.700" y="9.500" width="2" height="1.500" fill="#cfcfcf"/></svg>
<div class="sbtn" style="left:1143.200px;top:109.1px"></div>
<svg class="ic" style="left:1143.200px;top:109.1px" width="19" height="17.700" viewBox="0 0 19 18" fill="none" stroke="#cfcfcf" stroke-width=".95"><path d="M4,5 V14 H15 V6.500 H9.500 L8.500,5 Z"/><path d="M7,8 L12,12.500 M12,8 L7,12.500" stroke-width="1.500"/></svg>
<div class="sbtn" style="left:1143.200px;top:131.1px"></div>
<svg class="ic" style="left:1143.200px;top:131.1px" width="19" height="17.700" viewBox="0 0 19 18" fill="none" stroke="#cfcfcf" stroke-width=".95"><path d="M4,5 V14 H15 V6.500 H9.500 L8.500,5 Z"/><rect x="7" y="8" width="5.500" height="4.500" fill="#cfcfcf" fill-opacity=".5" stroke-dasharray="1 1"/></svg>
<div class="sbtn" style="left:1143.200px;top:153.1px"></div>
<svg class="ic" style="left:1143.200px;top:153.1px" width="19" height="17.700" viewBox="0 0 19 18" fill="none" stroke="#cfcfcf" stroke-width=".95"><path d="M4,5 V14 H15 V6.500 H9.500 L8.500,5 Z"/><path d="M6.500,8.500 H12.500 M6.500,10.500 H12.500 M6.500,12.500 H10"/></svg>
<div class="sbtn" style="left:1143.200px;top:175.0px"></div>
<svg class="ic" style="left:1143.200px;top:175.0px" width="19" height="17.700" viewBox="0 0 19 18" fill="none" stroke="#cfcfcf" stroke-width=".95"><rect x="4.500" y="5" width="10.500" height="9"/><path d="M7,7.500 L8.800,9 M12.500,7.500 L10.700,9 M7,12 L8.800,10.500 M12.500,12 L10.700,10.500"/></svg>
<div class="sbtn" style="left:1143.200px;top:196.9px"></div>
<svg class="ic" style="left:1143.200px;top:196.9px" width="19" height="17.700" viewBox="0 0 19 18" fill="none" stroke="#cfcfcf" stroke-width=".95"><path d="M4,5 V14 H15 V6.500 H9.500 L8.500,5 Z"/><rect x="7" y="8.500" width="5" height="3.500"/></svg>
<div class="sbtn" style="left:1143.200px;top:218.9px"></div>
<svg class="ic" style="left:1143.200px;top:218.9px" width="19" height="17.700" viewBox="0 0 19 18" fill="none" stroke="#cfcfcf" stroke-width=".95"><path d="M4.500,6 V14 H13.500 V10 M4.500,6 H10"/><path d="M8,11.500 L14,5 L15.500,6.500 L9.500,12.500 Z" stroke-width=".8"/></svg>
<div class="sbtn" style="left:1143.200px;top:240.8px"></div>
<svg class="ic" style="left:1143.200px;top:240.8px" width="19" height="17.700" viewBox="0 0 19 18" fill="none" stroke="#cfcfcf" stroke-width=".95"><path d="M4,6 V14 H15 V6.500 H9.500 L8.500,5 H5"/><circle cx="9.700" cy="10.300" r="2.300"/><circle cx="9.700" cy="10.300" r=".8" fill="#cfcfcf"/></svg>
<div class="sbtn" style="left:1143.200px;top:262.8px"></div>
<svg class="ic" style="left:1143.200px;top:262.8px" width="19" height="17.700" viewBox="0 0 19 18" fill="none" stroke="#cfcfcf" stroke-width=".95"><path d="M4.500,5 V14 H14.500 V6.500 H9.500 L8.500,5 Z"/><circle cx="9.500" cy="8" r=".9" fill="#cfcfcf"/><path d="M7.500,9.500 H11.500 M9.500,9.500 V11.500 L8,13.500 M9.500,11.500 L11,13.500" stroke-width=".8"/></svg>
<div class="pbg" style="left:1165.500px;top:43px;width:101.500px;height:188px"></div>
<div class="hdr" style="left:1165.500px;top:43.500px;width:101.500px;height:10.500px"></div>
<div class="menu3" style="left:1167.500px;top:44px"></div>
<div class="ptab" style="left:1177.300px;top:43.500px;width:33.500px;height:10.500px"></div>
<div class="t" style="left:1194px;top:44.5px;font-size:7.4px;line-height:8.9px;color:#cfcfcf;"><span class="sx" style="--s:0.878">Navi</span></div>
<svg class="ic" style="left:1181px;top:44.500px" width="10" height="9" viewBox="0 0 10 9" fill="none" stroke="#d4d4d4" stroke-width=".9"><rect x="1" y="1" width="8" height="6.500" rx="1.300"/><rect x="2.800" y="2.500" width="5" height="3.500" fill="#999" stroke="none"/></svg>
<div class="abs" style="left:1212.5px;top:43.500px;width:17.200px;height:10.500px;background:#525252"></div>
<div class="abs" style="left:1230.7px;top:43.500px;width:17.200px;height:10.500px;background:#525252"></div>
<div class="abs" style="left:1249px;top:43.500px;width:17.200px;height:10.500px;background:#525252"></div>
<svg class="ic" style="left:1212px;top:43.500px" width="55" height="10.500" viewBox="1212 43.500 55 10.500" fill="none" stroke="#7c7c7c" stroke-width=".9"><path d="M1217.500,53 V48 a3,3 0 0,1 6,0 V53"/><path d="M1235,49.500 a4.500,2.500 0 0,1 9,0 a4.500,2 0 0,1 -9,0 Z"/><path d="M1253.500,53 a4.500,5 0 0,1 9,0 M1258,47.500 V53"/></svg>
<div class="abs" style="left:1165.500px;top:54px;width:101.500px;height:149px;background:#3c3c3c"></div>
<div class="abs" style="left:1165.800px;top:58.100px;width:99.400px;height:140.600px;background:#fff;overflow:hidden">
<svg class="ic" style="left:0;top:0" width="99.900" height="141.600" viewBox="1165.800 58.100 99.900 141.600">
<defs><filter id="nb"><feGaussianBlur stdDeviation=".4"/></filter></defs>
<g filter="url(#nb)">
<ellipse cx="1216.400" cy="68.200" rx="6.300" ry="6" fill="#fbfbfb" stroke="#dcdcdc" stroke-width=".7"/>
<path d="M1211,72 Q1216,74 1221,72" fill="none" stroke="#d0d0d0" stroke-width=".5"/>
<path d="M1216.500,78 L1219.700,76.600 L1221,82 L1230.700,82.700 L1236,89 L1241.700,100.200 L1238,105.500 L1232.900,108.400 L1231.800,106.200 L1236.200,101.900 L1229.600,99.700 L1227.400,107.300 L1229,112 L1205,112 L1206.600,107.300 L1205,100.500 L1203.300,98.600 L1198,99.500 L1196.700,96.900 L1199.500,91 L1203.800,84.300 L1210,82 Z" fill="#3f6cb0"/>
<path d="M1203.800,110.600 L1234,110.600 L1235,119 L1228,122 L1221,126.500 L1217,129 L1211,124 L1203.400,118 Z" fill="#4f6e55"/>
<path d="M1209,111.500 L1229,111.500 L1228.500,114 L1209.500,114 Z" fill="#3a4046"/>
<path d="M1203.400,116 L1211,122 L1217,128.500 L1219.300,128.200 L1214,140 L1210.700,151.300 L1200.500,151.300 L1200,136.800 L1201,125 Z" fill="#3f6cb0"/>
<path d="M1219.300,128.200 L1222,124.500 L1232.400,117 L1235.800,136.800 L1234.700,154.200 L1225.100,151.300 L1222.500,140 Z" fill="#3f6cb0"/>
<path d="M1200.300,146.500 L1211.500,147.500 L1210.500,157.500 L1200.800,157 Z" fill="#3b3c48"/><path d="M1224.500,147 L1235.300,146.500 L1235.500,158.500 L1226.500,158.500 Z" fill="#3b3c48"/>
<path d="M1200.800,157 L1210.500,157.500 L1210,166 L1201.800,166 Z" fill="#3768b5"/><path d="M1226.500,158.500 L1235.500,158.500 L1235.800,167 L1228,167 Z" fill="#3768b5"/>
<path d="M1201.800,165 L1210,165 L1209.800,177.400 L1209.200,187.500 L1204,190 L1197.600,190.400 L1197.500,188 L1202,183.500 L1203.400,177.400 Z" fill="#3a3b58"/>
<path d="M1228,166 L1235.800,166 L1235.800,180.300 L1236.700,194.200 L1230.900,194.200 L1229.500,180.300 Z" fill="#3a3b58"/>
<path d="M1203.200,85.500 L1205.500,83.300 L1212,89 L1239.800,118.500 L1238,121 L1228,111 L1213,96.500 L1208.500,94.500 L1204.500,90 Z" fill="#23262b"/>
<path d="M1206,91 L1211,88 L1219,96 L1215,99.500 L1210,97 Z" fill="#30343a"/>
<path d="M1227,108 L1233.500,108.500 L1235.500,114 L1230,113 Z" fill="#2a2d33"/>
<path d="M1232.800,122 L1236,121.500 L1236.800,139 L1234,139 Z" fill="#3a3f4a"/>
<circle cx="1239.500" cy="81.600" r="1.700" fill="#5d7040"/><ellipse cx="1246.900" cy="88.500" rx="2.900" ry="2" fill="#4068aa" transform="rotate(-25 1246.900 88.500)"/><circle cx="1249.900" cy="94" r="2.400" fill="#3b3f45"/>
<circle cx="1198.100" cy="114.800" r="1.700" fill="#4a4a3a"/><circle cx="1244" cy="181.100" r="1.100" fill="#54603f"/><circle cx="1245.400" cy="191.300" r="1.900" fill="#23262a"/>
</g>
<path d="M1203.500,112.500 L1190,137.500 L1234.200,161.200 L1247.700,136.200" fill="none" stroke="#cc1818" stroke-width=".6"/>
<path d="M1203.500,112.500 L1247.700,136.200" fill="none" stroke="#cc1818" stroke-width="1.300"/>
<path d="M1244.300,140 L1246.800,142 M1243.200,142.500 L1245.500,144" stroke="#cc1818" stroke-width=".6"/>
</svg>
</div>
<div class="abs" style="left:1167.8px;top:206.5px;width:19px;height:9.5px;background:#353535;border:.6px solid #5c5c5c"></div>
<div class="t" style="left:1168.8px;top:206.6px;font-size:8px;line-height:9.6px;color:#f2f2f2;"><span class="sx" style="--s:0.864">100.0</span></div>
<div class="abs" style="left:1167.8px;top:218.8px;width:19px;height:9.5px;background:#353535;border:.6px solid #5c5c5c"></div>
<div class="t" style="left:1168.8px;top:218.9px;font-size:8px;line-height:9.6px;color:#f2f2f2;"><span class="sx" style="--s:0.878">-30.4</span></div>
<svg class="ic" style="left:1187px;top:205px" width="14" height="24" viewBox="1187 205 14 24"><path d="M1187.500,215.500 L1199,207.500 V215.500 Z" fill="#303030"/><path d="M1187.500,228 Q1193,217 1199,228 Z" fill="#303030"/><path d="M1187.300,205.500 V216.500 M1187.300,218 V229" stroke="#b5b5b5" stroke-width="1"/></svg>
<svg class="ic" style="left:1203px;top:205px" width="63" height="25" viewBox="1203 205 63 25" fill="none" stroke="#d2d2d2" stroke-width=".9">
<circle cx="1209.200" cy="211.200" r="3.600"/><path d="M1207.200,211.200 H1211.200"/>
<circle cx="1221.400" cy="211.200" r="3.600"/><path d="M1219.400,211.200 H1223.400 M1221.400,209.200 V213.200"/>
<circle cx="1233.800" cy="211.200" r="3.600"/><rect x="1232.200" y="209.600" width="3.200" height="3.200" fill="#d2d2d2"/>
<path d="M1243.500,208 H1247 V211 M1246.500,211.500 h3.500 v3 h-3.500 Z M1243.500,208 V212 H1246"/><rect x="1244.500" y="209" width="2" height="2" fill="#d2d2d2" stroke="none"/>
<path d="M1256,207.500 H1263.500 V215 H1256 Z M1258,213 L1262,209 M1259.500,209 H1262 V211.500"/>
<path d="M1206.500,221.500 a3.300,3.300 0 1,0 2.700,-1.500 M1209.500,218.200 L1207.700,220.200 L1210,221.500"/>
<path d="M1224.200,221.500 a3.300,3.300 0 1,1 -2.700,-1.500 M1221.200,218.200 L1223,220.200 L1220.700,221.500"/>
<circle cx="1233.800" cy="223.700" r="3.600"/><path d="M1233.800,221.500 V225.500 M1232.300,224.200 L1233.800,225.700 L1235.300,224.200"/>
<path d="M1247,219.500 V228 M1245.500,221 L1242.500,223.800 L1245.500,226.500 Z M1248.500,221 L1251.500,223.800 L1248.500,226.500 Z" fill="#d2d2d2" stroke-width=".6"/>
<path d="M1255.500,223.700 H1264 M1257,222.200 L1259.800,219.200 L1262.500,222.200 Z M1257,225.200 L1259.800,228.200 L1262.500,225.200 Z" fill="#d2d2d2" stroke-width=".6"/>
</svg>
<div class="abs" style="left:1165.500px;top:231px;width:101.500px;height:2px;background:#383838"></div>
<div class="pbg" style="left:1165.500px;top:229.300px;width:101.500px;height:131.500px"></div>
<div class="abs" style="left:1166.400px;top:242.500px;width:98px;height:117.500px;background:#404040;border:.7px solid #585858"></div>
<div class="hdr" style="left:1165.500px;top:232.500px;width:101.500px;height:10px"></div>
<div class="menu3" style="left:1167.500px;top:233px"></div>
<div class="ptab" style="left:1178.400px;top:232.500px;width:49.500px;height:10px"></div>
<div class="t" style="left:1194.3px;top:233.2px;font-size:7.4px;line-height:8.9px;color:#cfcfcf;"><span class="sx" style="--s:0.737">Layer Prope</span></div>
<svg class="ic" style="left:1181.500px;top:233px" width="10" height="9" viewBox="0 0 10 9" fill="none" stroke="#d4d4d4" stroke-width=".8"><path d="M1,3 L5,1 L9,3 L5,5 Z M1,5 L5,7 L9,5"/><circle cx="7.500" cy="6.800" r="1.500" fill="#4a4a4a"/></svg>
<div class="abs" style="left:1229.5px;top:232.500px;width:17.600px;height:10px;background:#525252"></div>
<div class="abs" style="left:1248.2px;top:232.500px;width:17.600px;height:10px;background:#525252"></div>
<svg class="ic" style="left:1229px;top:232.500px" width="38" height="10" viewBox="1229 232.500 38 10" fill="none" stroke="#7c7c7c" stroke-width=".9"><path d="M1234.500,241 a4,3.500 0 0,1 8,0 M1241,236 l1.500,-1.500"/><path d="M1253,241 a4,3.500 0 0,1 8,0 M1255,236 l-1.500,-1.500"/></svg>
<div class="t" style="left:1171.9px;top:245.5px;font-size:7.8px;line-height:9.4px;color:#e6e6e6;"><span class="sx" style="--s:0.802">Effect</span></div>
<div class="abs" style="left:1168px;top:250.200px;width:2.500px;height:.7px;background:#777"></div><div class="abs" style="left:1190px;top:250.200px;width:66px;height:.7px;background:#777"></div>
<div class="abs" style="left:1208.200px;top:254.500px;width:47.800px;height:11.500px;background:#5c5c5c;border:.6px solid #6e6e6e;border-radius:1px"></div>
<svg class="ic" style="left:1208px;top:254.500px" width="48" height="11.500" viewBox="1208 254.500 48 11.500" fill="none" stroke="#d8d8d8" stroke-width=".9">
<circle cx="1214.500" cy="260.300" r="3.400"/>
<g fill="#d8d8d8" stroke="none"><circle cx="1225.500" cy="258" r=".7"/><circle cx="1228" cy="258" r=".7"/><circle cx="1230.500" cy="258" r=".7"/><circle cx="1225.500" cy="260.300" r=".7"/><circle cx="1228" cy="260.300" r=".9"/><circle cx="1230.500" cy="260.300" r=".7"/><circle cx="1225.500" cy="262.600" r=".7"/><circle cx="1228" cy="262.600" r=".7"/><circle cx="1230.500" cy="262.600" r=".7"/></g>
<rect x="1237.500" y="257" width="5" height="5" rx="1"/><rect x="1239.500" y="259" width="5" height="5" rx="1" fill="#8a8a8a"/>
<path d="M1248.500,259 L1251,261.500 L1253.500,259"/></svg>
<div class="t" style="left:1171.4px;top:267.5px;font-size:7.8px;line-height:9.4px;color:#e6e6e6;"><span class="sx" style="--s:0.808">Expression color</span></div>
<div class="abs" style="left:1168px;top:272.200px;width:2.500px;height:.7px;background:#777"></div><div class="abs" style="left:1222px;top:272.200px;width:34px;height:.7px;background:#777"></div>
<div class="abs" style="left:1176.300px;top:278.800px;width:48.300px;height:11.600px;background:#5c5c5c;border:.6px solid #6e6e6e;border-radius:1px"></div>
<svg class="ic" style="left:1179px;top:279.500px" width="11" height="10" viewBox="0 0 11 10"><circle cx="5.500" cy="3.300" r="2.600" fill="#e23b3b"/><circle cx="3.600" cy="6.500" r="2.600" fill="#3fc24a" fill-opacity=".9"/><circle cx="7.400" cy="6.500" r="2.600" fill="#3c6ee0" fill-opacity=".9"/></svg>
<div class="t" style="left:1195.7px;top:280.0px;font-size:7.8px;line-height:9.4px;color:#e6e6e6;"><span class="sx" style="--s:0.783">Color</span></div><svg class="ic" style="left:1216.5px;top:283.5px" width="5" height="3" viewBox="0 0 5 3"><path d="M0.500,0.500 L2.5,2.5 L4.5,0.500" fill="none" stroke="#ddd" stroke-width=".9"/></svg>
<div class="abs" style="left:1165.500px;top:360.500px;width:101.500px;height:3px;background:#383838"></div>
<div class="pbg" style="left:1165.500px;top:363px;width:101.500px;height:267px"></div>
<div class="hdr" style="left:1165.500px;top:363.200px;width:101.500px;height:9.800px"></div>
<div class="menu3" style="left:1167.500px;top:363.500px"></div>
<div class="ptab" style="left:1178.100px;top:363.200px;width:32px;height:9.800px"></div>
<div class="t" style="left:1194.1px;top:363.9px;font-size:7.4px;line-height:8.9px;color:#cfcfcf;"><span class="sx" style="--s:0.751">Layer</span></div>
<svg class="ic" style="left:1181.500px;top:363.500px" width="10" height="9" viewBox="0 0 10 9" fill="none" stroke="#d4d4d4" stroke-width=".8"><path d="M1,3 L5,1 L9,3 L5,5 Z M1,4.800 L5,6.800 L9,4.800 M1,6.500 L5,8.500 L9,6.500"/></svg>
<div class="abs" style="left:1211.2px;top:363.200px;width:17px;height:9.800px;background:#525252"></div>
<div class="abs" style="left:1229.3px;top:363.200px;width:17px;height:9.800px;background:#525252"></div>
<svg class="ic" style="left:1211px;top:363.200px" width="36" height="10" viewBox="1211 363.200 36 10" fill="none" stroke="#7c7c7c" stroke-width=".9"><path d="M1216,370 a4,3 0 1,1 4,1 M1216,366.500 L1215,370 L1218.500,369.500"/><path d="M1234,372 V368 L1236,366 H1242 V372 M1234,368.500 H1242 M1237,366 V368.500"/></svg>
<div class="abs" style="left:1166.400px;top:374.500px;width:22.800px;height:12.200px;background:#5e5e5e;border:.6px solid #707070"></div>
<div class="abs" style="left:1168.500px;top:376.300px;width:9.500px;height:8.500px;border:.9px solid #a9b0c4;border-radius:1px;background:#565b68"></div><svg class="ic" style="left:1181.8px;top:379.2px" width="5" height="3" viewBox="0 0 5 3"><path d="M0.500,0.500 L2.5,2.5 L4.5,0.500" fill="none" stroke="#ddd" stroke-width=".9"/></svg>
<div class="abs" style="left:1191.300px;top:374.500px;width:24.600px;height:12.200px;background:#5e5e5e;border:.6px solid #707070"></div>
<div class="t" style="left:1193px;top:376.2px;font-size:7.4px;line-height:8.9px;color:#bdbdbd;"><span class="sx" style="--s:0.71">Multi</span></div><svg class="ic" style="left:1208.5px;top:379.2px" width="5" height="3" viewBox="0 0 5 3"><path d="M0.500,0.500 L2.5,2.5 L4.5,0.500" fill="none" stroke="#ddd" stroke-width=".9"/></svg>
<div class="abs" style="left:1219.300px;top:378px;width:22.800px;height:5px;background:linear-gradient(to right,#fff,#e8e8e8 60%,#cfcfcf)"></div>
<div class="abs" style="left:1242.600px;top:374.500px;width:1.200px;height:12.200px;background:#8a8a8a"></div>
<div class="t" style="left:1247.4px;top:376.0px;font-size:7.8px;line-height:9.4px;color:#e8e8e8;"><span class="sx" style="--s:0.815">100</span></div><svg class="ic" style="left:1259.5px;top:376.8px" width="5" height="3" viewBox="0 0 5 3"><path d="M0.500,2.5 L2.5,0.500 L4.5,2.5" fill="none" stroke="#ccc" stroke-width=".9"/></svg><svg class="ic" style="left:1259.5px;top:381.5px" width="5" height="3" viewBox="0 0 5 3"><path d="M0.500,0.500 L2.5,2.5 L4.5,0.500" fill="none" stroke="#ccc" stroke-width=".9"/></svg>
<svg class="ic" style="left:1166px;top:388px" width="100" height="25" viewBox="1166 388 100 25" fill="none" stroke="#d6d6d6" stroke-width=".9">
<path d="M1168.500,391.500 h5 v5 h-5 Z M1170.500,390 h5 v5" /><rect x="1169.800" y="392.800" width="2.400" height="2.400" fill="#d6d6d6" stroke="none"/>
<path d="M1181,390.500 H1186 M1183.500,390.500 V397.500 M1181.500,397.500 H1185.500 M1180.500,392.500 L1186.500,392.500 M1181,394.500 H1186"/>
<path d="M1192.500,390 h4 v5 h-4 Z M1194.500,395.500 v2 M1196.500,397 l2,1.200"/><rect x="1193.500" y="391" width="2" height="2" fill="#d6d6d6" stroke="none"/>
<path d="M1205.500,393.500 h5 v4 h-5 Z" fill="#d6d6d6"/><path d="M1206.500,393.500 v-1.500 a1.500,1.500 0 0,1 3,0 v1.500"/>
<g fill="#d6d6d6" stroke="none"><rect x="1217" y="390.500" width="2.500" height="2.500"/><rect x="1222" y="390.500" width="2.500" height="2.500"/><rect x="1219.500" y="393" width="2.500" height="2.500"/><rect x="1217" y="395.500" width="2.500" height="2.500"/><rect x="1222" y="395.500" width="2.500" height="2.500"/></g>
<g stroke="#757575"><circle cx="1233.500" cy="393.500" r="3.300"/><path d="M1236,396 l2,2 M1240.500,392.500 l1.500,1.500 l1.500,-1.500"/>
<path d="M1250,390.500 h7.500 l-7.500,7 Z M1259,392.500 l1.500,1.500 l1.500,-1.500"/></g>
</svg>
<svg class="ic" style="left:1166px;top:401px" width="100" height="13" viewBox="1166 401 100 13" fill="none" stroke="#d6d6d6" stroke-width=".9">
<path d="M1171,403 h7.500 v8 h-7.500 Z"/><circle cx="1178.800" cy="411" r="1.600" fill="#4a4a4a"/>
<path d="M1183.500,403 h7.500 v8 h-7.500 Z"/><circle cx="1187.200" cy="407" r="2"/><circle cx="1191" cy="411" r="1.600" fill="#4a4a4a"/>
<path d="M1195,404 v7 h8.500 v-6 h-4.500 l-1,-1 Z" fill="#d6d6d6" fill-opacity=".6"/><circle cx="1203.800" cy="411" r="1.600" fill="#4a4a4a"/>
<path d="M1207.500,405.500 h5 v5 h-5 Z M1210.500,403 h5.500 v5 h-3"/><path d="M1210,408 l1.500,1.500"/>
<path d="M1219.500,406 h5 v5 h-5 Z M1222.500,403 h5.500 v5.500 h-3"/>
<rect x="1231.300" y="402.800" width="8.800" height="8.800" rx="1" fill="#d6d6d6" stroke="none"/><circle cx="1235.700" cy="407.200" r="2.600" fill="#4a4a4a" stroke="none"/>
<g stroke="#707070"><path d="M1243.500,404.500 h5 v5 h-5 Z M1247.500,406.500 h5 v5 h-5 Z"/></g>
<path d="M1257.500,404.500 h5.500 M1259.200,404.500 v-1.200 h2.100 v1.200 M1258,404.500 l.5,7 h3.500 l.5,-7 M1259.600,406 v4 M1261,406 v4"/>
</svg>
<div class="abs" style="left:1166px;top:416.500px;width:92.500px;height:213.500px;background:#3b3b3b"></div>
<div class="abs" style="left:1177.500px;top:416.500px;width:.7px;height:213.500px;background:#2e2e2e"></div><div class="abs" style="left:1188.800px;top:416.500px;width:.7px;height:213.500px;background:#2e2e2e"></div>
<div class="sb" style="left:1258.500px;top:416.500px;width:7.500px;height:213.500px;background:#404040"></div>
<div class="abs" style="left:1258.500px;top:416.500px;width:7.500px;height:8px;background:#4d4d4d"></div><svg class="ic" style="left:1259.7px;top:419px" width="5" height="3" viewBox="0 0 5 3"><path d="M0.500,2.5 L2.5,0.500 L4.5,2.5" fill="none" stroke="#c8c8c8" stroke-width=".9"/></svg>
<div class="abs" style="left:1259px;top:508px;width:6.500px;height:112px;background:#5c5c5c;border-radius:1px"></div>
<div class="abs" style="left:1258.500px;top:622px;width:7.500px;height:8px;background:#4d4d4d"></div><svg class="ic" style="left:1259.7px;top:624.5px" width="5" height="3" viewBox="0 0 5 3"><path d="M0.500,0.500 L2.5,2.5 L4.5,0.500" fill="none" stroke="#c8c8c8" stroke-width=".9"/></svg>
<div class="abs" style="left:1203.3px;top:421.4px;width:14.3px;height:19.6px;background:conic-gradient(#d0d0d0 25%,#fff 0 50%,#d0d0d0 0 75%,#fff 0);background-size:4px 4px;border:.8px solid #2a2a2a;box-sizing:border-box"></div>
<div class="abs" style="left:1224px;top:420.7px;width:34.0px;height:10px;overflow:hidden"><div class="t" style="left:0px;top:0.5px;font-size:7.6px;line-height:9.1px;color:#e6e6e6;"><span class="sx" style="--s:0.8">100 % Normal</span></div></div>
<div class="t" style="left:1224px;top:433.9px;font-size:7.6px;line-height:9.1px;color:#e6e6e6;"><span class="sx" style="--s:0.801">Layer 6</span></div>
<svg class="ic" style="left:1167px;top:426.5px" width="10" height="7" viewBox="0 0 10 7" fill="none" stroke="#d4d4d4" stroke-width=".9"><path d="M.7,3.500 Q5,-1 9.300,3.500 Q5,8 .7,3.500 Z"/><circle cx="5" cy="3.500" r="1.300" fill="#d4d4d4" stroke="none"/></svg>
<div class="abs" style="left:1166px;top:443.2px;width:92.5px;height:.8px;background:#2c2c2c"></div>
<svg class="ic" style="left:1207px;top:424px" width="6" height="5" viewBox="0 0 6 5"><path d="M.5,.5 L5,4" stroke="#333" stroke-width=".7"/></svg>
<div class="abs" style="left:1181.500px;top:427px;width:4px;height:4.500px;border:.7px solid #4b4b4b"></div>
<svg class="ic" style="left:1193px;top:450.5px" width="3.5" height="5.5" viewBox="0 0 3.5 5.5"><path d="M0.500,0.500 L3.0,2.75 L0.500,5.0" fill="none" stroke="#d8d8d8" stroke-width=".9"/></svg>
<svg class="ic" style="left:1200.500px;top:448.500px" width="9" height="8" viewBox="0 0 9 8"><path d="M.5,1 H3.500 L4.300,2 H8.500 V7.500 H.5 Z" fill="#d0d0d0"/></svg>
<div class="t" style="left:1216.5px;top:445.1px;font-size:7.6px;line-height:9.1px;color:#e6e6e6;"><span class="sx" style="--s:0.8">100 % Normal</span></div>
<div class="t" style="left:1216.5px;top:453.1px;font-size:7.6px;line-height:9.1px;color:#e6e6e6;"><span class="sx" style="--s:0.798">Set</span></div>
<svg class="ic" style="left:1167px;top:448.5px" width="10" height="7" viewBox="0 0 10 7" fill="none" stroke="#d4d4d4" stroke-width=".9"><path d="M.7,3.500 Q5,-1 9.300,3.500 Q5,8 .7,3.500 Z"/><circle cx="5" cy="3.500" r="1.300" fill="#d4d4d4" stroke="none"/></svg>
<div class="abs" style="left:1166px;top:462.3px;width:92.5px;height:.8px;background:#2c2c2c"></div>
<div class="abs" style="left:1181.500px;top:449.500px;width:4px;height:4.500px;border:.7px solid #4b4b4b"></div>
<svg class="ic" style="left:1191.5px;top:470.5px" width="5.5" height="3.5" viewBox="0 0 5.5 3.5"><path d="M0.500,0.500 L2.75,3.0 L5.0,0.500" fill="none" stroke="#d8d8d8" stroke-width=".9"/></svg>
<svg class="ic" style="left:1200px;top:466.500px" width="10.500" height="8" viewBox="0 0 10.500 8"><path d="M.5,7.500 V1 H3.500 L4.300,2 H8 V3.500" fill="none" stroke="#d0d0d0" stroke-width=".9"/><path d="M.5,7.500 L2.500,3.500 H10 L8,7.500 Z" fill="#d0d0d0"/></svg>
<div class="t" style="left:1216.5px;top:464.1px;font-size:7.6px;line-height:9.1px;color:#e6e6e6;"><span class="sx" style="--s:0.8">100 % Normal</span></div>
<div class="t" style="left:1216.5px;top:471.6px;font-size:7.6px;line-height:9.1px;color:#e6e6e6;"><span class="sx" style="--s:0.802">C</span></div>
<svg class="ic" style="left:1167px;top:467.5px" width="10" height="7" viewBox="0 0 10 7" fill="none" stroke="#d4d4d4" stroke-width=".9"><path d="M.7,3.500 Q5,-1 9.300,3.500 Q5,8 .7,3.500 Z"/><circle cx="5" cy="3.500" r="1.300" fill="#d4d4d4" stroke="none"/></svg>
<div class="abs" style="left:1166px;top:481.5px;width:92.5px;height:.8px;background:#2c2c2c"></div>
<div class="abs" style="left:1189.500px;top:481.800px;width:69px;height:23.900px;background:#66718a"></div>
<div class="abs" style="left:1202.3px;top:483.3px;width:16.2px;height:21.3px;background:conic-gradient(#d0d0d0 25%,#fff 0 50%,#d0d0d0 0 75%,#fff 0);background-size:4px 4px;border:.8px solid #2a2a2a;box-sizing:border-box"></div>
<div class="abs" style="left:1200.900px;top:482px;width:18.800px;height:23.800px;border:.9px solid #eeeeee"></div>
<div class="t" style="left:1224px;top:483.8px;font-size:7.6px;line-height:9.1px;color:#e6e6e6;"><span class="sx" style="--s:0.801">100 % Multi</span></div>
<div class="t" style="left:1224px;top:496.2px;font-size:7.6px;line-height:9.1px;color:#e6e6e6;"><span class="sx" style="--s:0.801">Layer 10</span></div>
<svg class="ic" style="left:1167px;top:489.5px" width="10" height="7" viewBox="0 0 10 7" fill="none" stroke="#d4d4d4" stroke-width=".9"><path d="M.7,3.500 Q5,-1 9.300,3.500 Q5,8 .7,3.500 Z"/><circle cx="5" cy="3.500" r="1.300" fill="#d4d4d4" stroke="none"/></svg>
<div class="abs" style="left:1166px;top:505.7px;width:92.5px;height:.8px;background:#2c2c2c"></div>
<svg class="ic" style="left:1179.500px;top:489px" width="8" height="8" viewBox="0 0 8 8"><path d="M.8,7.200 L1.500,5.200 L6,.8 L7.200,2 L2.800,6.500 Z M.5,7.600 H7.500" fill="none" stroke="#d8d8d8" stroke-width=".8"/></svg>
<div class="abs" style="left:1202.3px;top:508px;width:16.5px;height:21px;background:#fff;border:.8px solid #2a2a2a;box-sizing:border-box"></div>
<svg class="ic" style="left:1206px;top:510px" width="9" height="17" viewBox="0 0 9 17"><path d="M3.500,0.500 h2 v2 l2,1 l.5,5 l-1,.5 l.5,7.500 h-1.500 l-1,-6 l-1,6 h-1.500 l.5,-7.500 l-1,-.5 l.5,-5 l2,-1 Z" fill="#466aa8"/></svg>
<div class="abs" style="left:1224px;top:508.5px;width:34.0px;height:10px;overflow:hidden"><div class="t" style="left:0px;top:0.5px;font-size:7.6px;line-height:9.1px;color:#e6e6e6;"><span class="sx" style="--s:0.8">100 % Normal</span></div></div>
<div class="t" style="left:1224px;top:520.9px;font-size:7.6px;line-height:9.1px;color:#e6e6e6;"><span class="sx" style="--s:0.801">Layer 9</span></div>
<svg class="ic" style="left:1167px;top:514.5px" width="10" height="7" viewBox="0 0 10 7" fill="none" stroke="#d4d4d4" stroke-width=".9"><path d="M.7,3.500 Q5,-1 9.300,3.500 Q5,8 .7,3.500 Z"/><circle cx="5" cy="3.500" r="1.300" fill="#d4d4d4" stroke="none"/></svg>
<div class="abs" style="left:1166px;top:531.2px;width:92.5px;height:.8px;background:#2c2c2c"></div>
<div class="abs" style="left:1193.3px;top:534px;width:14.3px;height:19.5px;background:conic-gradient(#d0d0d0 25%,#fff 0 50%,#d0d0d0 0 75%,#fff 0);background-size:4px 4px;border:.8px solid #2a2a2a;box-sizing:border-box"></div>
<div class="t" style="left:1213.8px;top:533.7px;font-size:7.6px;line-height:9.1px;color:#e6e6e6;"><span class="sx" style="--s:0.8">100 % Normal</span></div>
<div class="t" style="left:1213.8px;top:545.6px;font-size:7.6px;line-height:9.1px;color:#e6e6e6;"><span class="sx" style="--s:0.801">ref.</span></div>
<svg class="ic" style="left:1167px;top:539.5px" width="10" height="7" viewBox="0 0 10 7" fill="none" stroke="#d4d4d4" stroke-width=".9"><path d="M.7,3.500 Q5,-1 9.300,3.500 Q5,8 .7,3.500 Z"/><circle cx="5" cy="3.500" r="1.300" fill="#d4d4d4" stroke="none"/></svg>
<div class="abs" style="left:1166px;top:555.9px;width:92.5px;height:.8px;background:#2c2c2c"></div>
<div class="abs" style="left:1181.500px;top:541px;width:4px;height:4.500px;border:.7px solid #4b4b4b"></div>
<div class="abs" style="left:1193.3px;top:558.5px;width:14.3px;height:19.5px;background:conic-gradient(#d0d0d0 25%,#fff 0 50%,#d0d0d0 0 75%,#fff 0);background-size:4px 4px;border:.8px solid #2a2a2a;box-sizing:border-box"></div>
<div class="t" style="left:1213.8px;top:558.8px;font-size:7.6px;line-height:9.1px;color:#e6e6e6;"><span class="sx" style="--s:0.799">51 % Normal</span></div>
<div class="t" style="left:1213.8px;top:570.2px;font-size:7.6px;line-height:9.1px;color:#e6e6e6;"><span class="sx" style="--s:0.801">Layer 3</span></div>
<svg class="ic" style="left:1167px;top:564.5px" width="10" height="7" viewBox="0 0 10 7" fill="none" stroke="#4e4e4e" stroke-width=".9"><path d="M.7,3.500 Q5,-1 9.300,3.500 Q5,8 .7,3.500 Z"/><circle cx="5" cy="3.500" r="1.300" fill="#4e4e4e" stroke="none"/></svg>
<div class="abs" style="left:1166px;top:580.5px;width:92.5px;height:.8px;background:#2c2c2c"></div>
<svg class="ic" style="left:1197px;top:562px" width="6" height="5" viewBox="0 0 6 5"><path d="M.5,.5 L5,4" stroke="#333" stroke-width=".7"/></svg>
<div class="abs" style="left:1193.3px;top:583px;width:14.3px;height:19.5px;background:conic-gradient(#d0d0d0 25%,#fff 0 50%,#d0d0d0 0 75%,#fff 0);background-size:4px 4px;border:.8px solid #2a2a2a;box-sizing:border-box"></div>
<div class="t" style="left:1213.8px;top:583.5px;font-size:7.6px;line-height:9.1px;color:#e6e6e6;"><span class="sx" style="--s:0.8">100 % Normal</span></div>
<div class="t" style="left:1213.8px;top:595.8px;font-size:7.6px;line-height:9.1px;color:#e6e6e6;"><span class="sx" style="--s:0.802">refp</span></div>
<svg class="ic" style="left:1167px;top:589.5px" width="10" height="7" viewBox="0 0 10 7" fill="none" stroke="#4e4e4e" stroke-width=".9"><path d="M.7,3.500 Q5,-1 9.300,3.500 Q5,8 .7,3.500 Z"/><circle cx="5" cy="3.500" r="1.300" fill="#4e4e4e" stroke="none"/></svg>
<div class="abs" style="left:1166px;top:605.2px;width:92.5px;height:.8px;background:#2c2c2c"></div>
<div class="abs" style="left:1193.3px;top:609.3px;width:14.3px;height:18.5px;background:#fff;border:.8px solid #2a2a2a;box-sizing:border-box"></div>
<svg class="ic" style="left:1216.500px;top:609.500px" width="10" height="10.500" viewBox="0 0 10 10.500"><path d="M1,.5 H9 V9 L7,10 H1 Z" fill="#f0f0f0"/><path d="M3,2.500 V8 H7.500" fill="none" stroke="#555" stroke-width=".7"/></svg>
<div class="t" style="left:1213.8px;top:621.2px;font-size:7.6px;line-height:9.1px;color:#e6e6e6;"><span class="sx" style="--s:0.8">Paper</span></div>
<svg class="ic" style="left:1167px;top:613.5px" width="10" height="7" viewBox="0 0 10 7" fill="none" stroke="#4e4e4e" stroke-width=".9"><path d="M.7,3.500 Q5,-1 9.300,3.500 Q5,8 .7,3.500 Z"/><circle cx="5" cy="3.500" r="1.300" fill="#4e4e4e" stroke="none"/></svg>
<div class="abs" style="left:1181.500px;top:566px;width:4px;height:4.500px;border:.7px solid #4b4b4b"></div>
<div class="abs" style="left:1181.500px;top:591px;width:4px;height:4.500px;border:.7px solid #4b4b4b"></div>
<div class="abs" style="left:1181.500px;top:615px;width:4px;height:4.500px;border:.7px solid #4b4b4b"></div>
<div class="t" style="left:1073px;top:576.5px;font-size:11.3px;line-height:13.6px;color:rgba(235,235,235,.45);"><span class="sx" style="--s:1.054">Activate Windows</span></div>
<div class="t" style="left:1073px;top:591.4px;font-size:8.5px;line-height:10.2px;color:rgba(235,235,235,.45);"><span class="sx" style="--s:1.043">Go to Settings to activate Windows.</span></div>

<!-- bottom.html -->
<div class="abs" style="left:99px;top:599.100px;width:884px;height:7.400px;background:#464646"></div>
<div class="abs" style="left:967px;top:599.200px;width:7.500px;height:7px;background:#505050"></div>
<div class="abs" style="left:99px;top:599.100px;width:204px;height:7.400px;background:#3a3a3a"></div>
<div class="abs" style="left:99.500px;top:599.200px;width:34.500px;height:7.600px;background:#484848"></div>
<div class="abs" style="left:136px;top:599.200px;width:23px;height:7.600px;background:#404040;border:.5px solid #5a5a5a"></div>
<div class="abs" style="left:160.500px;top:599.200px;width:36.500px;height:7.600px;background:#4c4c4c"></div>
<div class="abs" style="left:99px;top:599.200px;width:40px;height:7.500px;overflow:hidden"><div class="t" style="left:2.500px;top:.2px;font-size:8px;color:#f0f0f0"><span class="sx" style="--s:.9">100.0</span></div></div>
<svg class="ic" style="left:160px;top:599px" width="40" height="8" viewBox="160 599 40 8" fill="none" stroke="#c9c9c9" stroke-width=".9"><path d="M164.200,603 H169.200 M177,603 H182.200 M179.600,600.500 V605.500"/><rect x="189" y="601" width="4" height="4" fill="#e0e0e0" stroke="none"/></svg>
<svg class="ic" style="left:197px;top:599px" width="26" height="8" viewBox="197 599 26 8"><path d="M198,599.300 L210,606.800 H198 Z" fill="#454545"/><path d="M221.500,599.300 V606.800" stroke="#7a7a7a" stroke-width="1"/></svg>
<div class="abs" style="left:223.500px;top:599.200px;width:33px;height:7.600px;background:#404040;overflow:hidden"><div class="tr" style="right:1px;top:.2px;font-size:8px;color:#f0f0f0"><span class="sx" style="--s:.9;transform-origin:100% 50%">-30.4</span></div></div>
<svg class="ic" style="left:259px;top:599px" width="44" height="8" viewBox="259 599 44 8" fill="none" stroke="#b8b8b8" stroke-width=".8"><path d="M262,604.500 a2.500,2.500 0 1,0 2,-3.600 M264.500,599.800 L263,601 L264.700,602.300"/><path d="M278.500,604.500 a2.500,2.500 0 1,1 -2,-3.600 M276,599.800 L277.500,601 L275.800,602.300"/><circle cx="287.600" cy="603" r="2.800"/><path d="M287.600,601.500 V604.300"/><path d="M299.500,600.700 L297.200,603 L299.500,605.300"/></svg>
<div class="abs" style="left:582.500px;top:600px;width:139px;height:6px;background:#626262;border-radius:1.500px"></div>
<svg class="ic" style="left:967px;top:599.500px" width="6" height="7" viewBox="0 0 6 7"><path d="M1.500,1 L4.500,3.500 L1.500,6" fill="none" stroke="#c8c8c8" stroke-width=".9"/></svg>
<div class="abs" style="left:99px;top:606.500px;width:884px;height:25.500px;background:#383838"></div>
<div class="abs" style="left:983px;top:630px;width:284px;height:2px;background:#3b3b3b"></div>
<div class="abs" style="left:114px;top:610px;width:23px;height:19.800px;background:#515151"></div>
<svg class="ic" style="left:119px;top:613.500px" width="13" height="12" viewBox="0 0 13 12" fill="none" stroke="#d0d0d0" stroke-width=".9"><path d="M1.500,1.500 H11 V10 H1.500 Z M3,1.500 V10 M5,1.500 V10"/><circle cx="8" cy="4.500" r=".8" fill="#d0d0d0"/><circle cx="8" cy="7.500" r=".8" fill="#d0d0d0"/></svg>
<svg class="ic" style="left:102.500px;top:610px" width="7" height="20" viewBox="0 0 7 20" fill="none" stroke="#7b7b7b" stroke-width=".9"><path d="M1,3.500 L3.500,1 L6,3.500"/><path d="M1,13.500 L3.500,16 L6,13.500 M1,16 L3.500,18.500 L6,16"/></svg>

<!-- taskbar.html -->
<div class="abs" id="taskbar" style="left:99px;top:632px;width:1168px;height:25px;background:linear-gradient(to right,#1a323f 0%,#1b3040 35%,#1c2b45 70%,#1d2947 100%)"></div>
<div class="abs" style="left:99px;top:631.600px;width:1168px;height:1px;background:#20252b"></div>
<div class="abs" style="left:367.200px;top:632px;width:29.400px;height:25px;background:#cd7a2e"></div>
<div class="abs" style="left:487.400px;top:632px;width:28.800px;height:25px;background:#48585f"></div>
<div class="abs" style="left:310px;top:655.300px;width:24px;height:1.700px;background:#8db4cf"></div>
<div class="abs" style="left:340px;top:655.300px;width:24px;height:1.700px;background:#8db4cf"></div>
<div class="abs" style="left:367.200px;top:655.300px;width:29.400px;height:1.700px;background:#e08a3a"></div>
<div class="abs" style="left:399px;top:655.300px;width:25px;height:1.700px;background:#8db4cf"></div>
<div class="abs" style="left:429px;top:655.300px;width:25px;height:1.700px;background:#8db4cf"></div>
<div class="abs" style="left:458px;top:655.300px;width:26px;height:1.700px;background:#8db4cf"></div>
<div class="abs" style="left:487.400px;top:655.300px;width:28.800px;height:1.700px;background:#a8c6da"></div>
<svg class="ic" style="left:99px;top:632px" width="430" height="25" viewBox="99 632 430 25">
 <defs>
  <radialGradient id="ffg" cx=".75" cy=".12" r="1"><stop offset="0" stop-color="#ffe23a"/><stop offset=".4" stop-color="#ff9a1e"/><stop offset=".75" stop-color="#f5402e"/><stop offset="1" stop-color="#e31f6a"/></radialGradient>
  <linearGradient id="edg" x1="0" y1="0" x2="1" y2="1"><stop offset="0" stop-color="#35c1a0"/><stop offset=".5" stop-color="#1f8fd8"/><stop offset="1" stop-color="#0c59a4"/></linearGradient>
 </defs>
 <!-- windows -->
 <g fill="#ffffff"><path d="M108.700,641.600 L113,641 V644.600 H108.700 Z M113.700,640.900 L119,640.100 V644.600 H113.700 Z M108.700,645.300 H113 V648.900 L108.700,648.300 Z M113.700,645.300 H119 V649.800 L113.700,649 Z"/></g>
 <!-- search -->
 <circle cx="144.800" cy="643.600" r="3.400" fill="none" stroke="#fff" stroke-width="1.100"/><path d="M142.500,646.200 L138.300,650" stroke="#fff" stroke-width="1.200"/>
 <!-- task view -->
 <g fill="none" stroke="#fff" stroke-width="1.100"><rect x="168.600" y="641.800" width="5.800" height="5.600"/><path d="M167,640.200 H176 M167,649 H176"/><path d="M177.300,642 V643.200 M177.300,645.500 V647.500" stroke-width="1"/></g>
 <!-- firefox -->
 <path d="M196.200,645.500 Q196,641 199,639.500 Q199.500,640.800 200.300,641 Q201,638.500 204,637.300 Q204.300,639 205.800,640 Q207,638.800 207,637.800 Q210.200,641 210,645.500 Q209.800,652 203,652.200 Q196.500,652 196.200,645.500 Z" fill="url(#ffg)"/>
 <circle cx="202.700" cy="645.300" r="2.600" fill="#8b3fd6"/><path d="M199.500,646 Q199.500,643 202,642.300 Q204.500,642 205.800,644 Q204,643.300 202.800,644.200 Q204.800,645 204.300,647 Q203.500,648.800 201.500,648.300 Q199.700,647.800 199.500,646 Z" fill="#ff9a2a" fill-opacity=".55"/>
 <!-- paint -->
 <path d="M225.500,646 Q225.500,641 231,640 Q238,639.500 239,644 Q239.500,648 235.500,648.500 Q233.500,648.700 233.500,650 Q233.500,652 230.500,651.500 Q225.500,650.500 225.500,646 Z" fill="#cfd8e2"/><circle cx="229" cy="644" r="1.100" fill="#e64545"/><circle cx="232.500" cy="642.700" r="1.100" fill="#3fa2e0"/><circle cx="236" cy="644" r="1.100" fill="#f0c330"/><circle cx="229.500" cy="648" r="1.100" fill="#5cc45c"/><path d="M234,647.500 L239.500,639.500 L240.800,640.300 L236,648.500 Z" fill="#c89a5a"/><path d="M239.500,639.500 L240.800,637.500 L241.800,638.200 L240.800,640.300 Z" fill="#e8d6a8"/>
 <!-- edge -->
 <path d="M255.300,645.500 Q255.300,638 262.500,637.500 Q268.500,637.500 269.800,643 Q270,646.500 266.500,647 H263 Q263.500,649.800 267.800,649.300 Q266,652.300 261.800,652.200 Q255.800,651.500 255.300,645.500 Z" fill="#1b74d0"/>
 <path d="M257,641 Q259,637.600 262.500,637.500 Q268.500,637.500 269.800,643 Q270,646.500 266.500,647 H264 Q266,645 264.500,642.800 Q262,640.300 257,641 Z" fill="#3ec06e"/>
 <path d="M258.500,646.500 Q258.500,642.500 262.200,642.300 Q264.800,642.500 265,644.800 Q264.800,646.200 263,647 Q263.500,649.800 267.800,649.300 Q266,651 263,650.800 Q258.800,650.300 258.500,646.500 Z" fill="#0c4f9e"/>
 <!-- photos -->
 <rect x="286.200" y="638.200" width="12.800" height="12.700" fill="#3a9be8"/><path d="M286.200,650.900 V646.500 L291,641.500 L295,646 L296.800,644.500 L299,647 V650.900 Z" fill="#123f8a"/><path d="M286.200,650.900 V646.500 L291,641.500 L293,643.700 L288.500,650.900 Z" fill="#1d56b0"/><circle cx="296" cy="640.800" r="1.100" fill="#e8f6ff"/>
 <!-- explorer -->
 <path d="M314.500,640 H319 L320,641.200 H329 V650.500 H314.500 Z" fill="#f3b52a"/><rect x="314.500" y="642.500" width="14.500" height="8" fill="#ffd45c"/><rect x="318" y="646.500" width="7.500" height="4" fill="#3b8fd8"/><rect x="319.500" y="648" width="4.500" height="2.500" fill="#ffd45c"/>
 <!-- chrome -->
 <circle cx="351.800" cy="645" r="7" fill="#e33b2e"/><path d="M351.800,645 L345.740,648.500 A7,7 0 0,0 355.300,651.060 Z" fill="#2ea44f"/><path d="M351.800,645 L355.300,651.060 A7,7 0 0,0 357.860,641.500 Z" fill="#fbc116"/><path d="M345.740,648.500 A7,7 0 0,1 345.740,641.500 L351.800,645 Z" fill="#2ea44f"/><path d="M351.800,638 A7,7 0 0,1 357.860,641.500 H351.800 Z" fill="#e33b2e"/><circle cx="351.800" cy="645" r="3.200" fill="#fff"/><circle cx="351.800" cy="645" r="2.500" fill="#4285f4"/>
 <!-- discord -->
 <rect x="374.500" y="638.500" width="14.500" height="12" rx="2.500" fill="#7289da"/><path d="M377.500,647.500 Q377,643.500 378.500,641.800 Q380,641 381,641.200 M386,647.500 Q386.500,643.500 385,641.800 Q383.500,641 382.500,641.200 M377.500,647.500 Q379.500,649 381.700,648.500 Q384,649 386,647.500" fill="none" stroke="#fff" stroke-width="1"/><circle cx="379.800" cy="645.300" r="1" fill="#fff"/><circle cx="383.700" cy="645.300" r="1" fill="#fff"/><path d="M378,642 H385.500 V647 H378 Z" fill="#fff" fill-opacity=".85"/><circle cx="379.900" cy="645" r=".9" fill="#7289da"/><circle cx="383.600" cy="645" r=".9" fill="#7289da"/>
 <!-- clip studio -->
 <rect x="405" y="638.500" width="13.500" height="12.500" rx="1.500" fill="#cfcfcf"/><path d="M408,645 a3.800,2.800 0 1,1 7.500,0 a3.800,2.800 0 1,1 -7.500,0 M410,645 a1.800,1.200 0 1,1 3.600,0 a1.800,1.200 0 1,1 -3.600,0" fill="none" stroke="#555" stroke-width=".9"/>
 <!-- CSP -->
 <rect x="434.800" y="638.300" width="13.500" height="13" rx="1" fill="#f4f4f4"/><path d="M438,642.500 Q441,639.500 444.500,641.500 Q446,643.500 443,645 Q439.500,646 440.500,648 Q442,649.500 445.500,648" fill="none" stroke="#222" stroke-width="1.500" stroke-linecap="round"/>
 <!-- steam -->
 <circle cx="470" cy="645" r="6.800" fill="#17375e"/><path d="M463.300,646.500 L468,648.300 Q469.500,646 471.200,646.200 L473.200,643.200" stroke="#fff" stroke-width="1.600" fill="none" stroke-linecap="round"/><circle cx="473.500" cy="642.700" r="2" fill="none" stroke="#fff" stroke-width="1"/><circle cx="469" cy="648.200" r="1.600" fill="none" stroke="#fff" stroke-width=".9"/>
 <!-- game -->
 <path d="M496.500,639.500 L499.500,638 L501,640 L504,638.500 L506,641.500 L504.500,645 L506.500,649 L503,652 L500.500,650 L497.500,651.500 L498,648 L495.500,646 L497,643.500 Z" fill="#b8281c"/><path d="M498.500,642 L501.500,641 L503,644 L501,647 L498.500,645.500 Z" fill="#e88a2e"/><path d="M501.500,646.500 L504,649.500 L501,650 Z" fill="#5a120c"/>
</svg>
<svg class="ic" style="left:1110px;top:632px" width="157" height="25" viewBox="1110 632 157 25" fill="none" stroke="#fff" stroke-width=".9">
 <path d="M1115.200,646.200 L1118,643.400 L1120.800,646.200"/>
 <path d="M1129.500,647.500 a5.500,5.500 0 0,1 5.500,-5.500 M1131.500,647.500 a3.500,3.500 0 0,1 3.500,-3.500" stroke-opacity=".9"/><path d="M1133,647.800 L1135.200,645.600 V647.800 Z" fill="#fff"/>
 <path d="M1142.500,643.800 H1144.300 L1146.500,641.800 V648.200 L1144.300,646.200 H1142.500 Z M1148,643.500 Q1149,645 1148,646.500 M1149.500,642.300 Q1151.200,645 1149.500,647.700"/>
 <path d="M1160.300,646.500 l-1.400,1.400 a1.800,1.800 0 0,1 -2.600,-2.600 l2.200,-2.200 a1.800,1.800 0 0,1 2.600,0 M1162,643.700 l1.400,-1.400 a1.800,1.800 0 0,1 2.600,2.600 l-2.200,2.200 a1.800,1.800 0 0,1 -2.600,0" stroke-width="1"/>
 <path d="M1242,641 H1251.500 V647.500 H1245.500 L1243.500,649.500 V647.500 H1242 Z" fill="#fff" stroke="none"/><path d="M1243.800,643 H1249.800 M1243.800,645 H1249.800" stroke="#1d2947" stroke-width=".6"/>
 <circle cx="1251.200" cy="649.200" r="3.100" fill="#1d2947" stroke="#fff" stroke-width=".7"/>
 <path d="M1265.500,632 V657" stroke="#6d7484" stroke-width=".7"/>
</svg>
<div class="abs" style="left:1177.400px;top:640.500px;font-size:7.700px;line-height:9px;color:#fff;white-space:nowrap"><span class="sx" style="--s:.9">ENG</span></div>
<div class="abs" style="left:1190px;top:635px;width:50px;text-align:center;font-size:8px;line-height:9px;color:#fff;white-space:nowrap"><span class="sx" style="--s:.9;transform-origin:50% 50%">1:02 PM</span></div>
<div class="abs" style="left:1190px;top:645px;width:50px;text-align:center;font-size:8px;line-height:9px;color:#fff;white-space:nowrap"><span class="sx" style="--s:.9;transform-origin:50% 50%">1/30/2021</span></div>
<div class="abs" style="left:1249.700px;top:646.200px;width:3px;font-size:5px;line-height:6px;color:#fff;text-align:center">1</div>
<div class="abs" style="left:0;top:0;width:99px;height:657px;background:#0b0b0b"></div>
<div class="abs" style="left:1267px;top:0;width:99px;height:657px;background:#0b0b0b"></div>

</div>
</body></html>
